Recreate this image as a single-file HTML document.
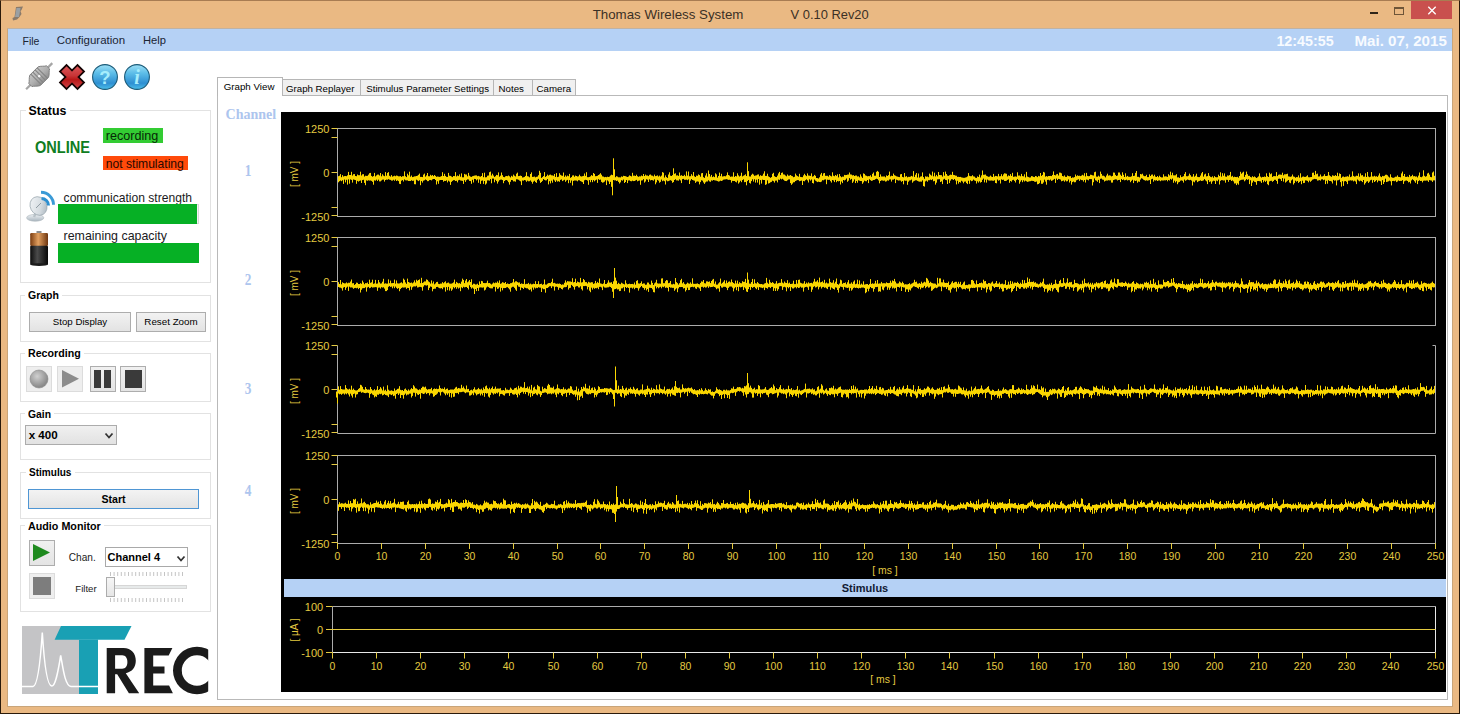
<!DOCTYPE html><html><head><meta charset="utf-8"><style>
html,body{margin:0;padding:0;width:1460px;height:716px;overflow:hidden;background:#fff}
.t{position:absolute;white-space:pre;line-height:1;font-family:"Liberation Sans",sans-serif}
.r{position:absolute;box-sizing:border-box}
svg{position:absolute}
</style></head><body>

<div class="r" style="left:0px;top:0px;width:1460px;height:714px;background:#EAB983;border:1px solid #2a1a0a;border-top-color:#A87C52"></div>
<div class="r" style="left:7px;top:28px;width:1446px;height:679px;background:#fff;border:1px solid #C9A57A;border-top-color:#BFB2A4"></div>
<div class="r" style="left:8px;top:29px;width:1444px;height:22px;background:#B5D1F5"></div>
<div class="t" style="left:592.7px;top:8.24px;font-size:13.3px;font-weight:400;color:#3b3025;font-family:'Liberation Sans',sans-serif;">Thomas Wireless System</div>
<div class="t" style="left:790.6px;top:8.58px;font-size:12.9px;font-weight:400;color:#3b3025;font-family:'Liberation Sans',sans-serif;">V 0.10 Rev20</div>
<svg style="left:11px;top:5px" width="14" height="17" viewBox="0 0 14 17"><path d="M5 2 L12 1.5 L10.5 5 L9.5 6 L10.5 9 L8.5 12 L6 14.5 L2 15.5 L1.5 13 L3.5 12 Z" fill="#8a7a6a"/><path d="M5.5 3 L9.5 3 L8 12 L4 12 Z" fill="#9aa0a4"/></svg>
<div class="r" style="left:1370px;top:12px;width:8px;height:2px;background:#2e2418"></div>
<div class="r" style="left:1394px;top:7px;width:10px;height:8px;border:1px solid #6e5538;border-top-width:2px"></div>
<div class="r" style="left:1411px;top:1px;width:41px;height:18px;background:#C9504E"></div>
<svg style="left:1426px;top:4px" width="12" height="12"><path d="M2.3 2.8L9.7 10.2M9.7 2.8L2.3 10.2" stroke="#fff" stroke-width="1.35"/></svg>
<div class="t" style="left:22.5px;top:35.51px;font-size:10.5px;font-weight:400;color:#1b2433;font-family:'Liberation Sans',sans-serif;">File</div>
<div class="t" style="left:56.7px;top:34.67px;font-size:11.5px;font-weight:400;color:#1b2433;font-family:'Liberation Sans',sans-serif;">Configuration</div>
<div class="t" style="left:143px;top:34.92px;font-size:11.2px;font-weight:400;color:#1b2433;font-family:'Liberation Sans',sans-serif;">Help</div>
<div class="t" style="left:1276.4px;top:33.90px;font-size:14.3px;font-weight:700;color:#f8fbff;font-family:'Liberation Sans',sans-serif;">12:45:55</div>
<div class="t" style="left:1354.5px;top:33.22px;font-size:15.1px;font-weight:700;color:#f8fbff;font-family:'Liberation Sans',sans-serif;">Mai. 07, 2015</div>
<div class="r" style="left:20px;top:110px;width:191px;height:173px;border:1px solid #E2E2E2"></div>
<div class="r" style="left:25.5px;top:109px;width:44px;height:3px;background:#fff"></div>
<div class="t" style="left:28.5px;top:105.10px;font-size:12.4px;font-weight:700;color:#000;font-family:'Liberation Sans',sans-serif;transform:scaleX(1.0);transform-origin:0 0">Status</div>
<div class="r" style="left:20px;top:295px;width:191px;height:47px;border:1px solid #E2E2E2"></div>
<div class="r" style="left:25px;top:294px;width:37px;height:3px;background:#fff"></div>
<div class="t" style="left:28px;top:290.13px;font-size:11.3px;font-weight:700;color:#000;font-family:'Liberation Sans',sans-serif;transform:scaleX(0.93);transform-origin:0 0">Graph</div>
<div class="r" style="left:20px;top:353px;width:191px;height:49px;border:1px solid #E2E2E2"></div>
<div class="r" style="left:25px;top:352px;width:59px;height:3px;background:#fff"></div>
<div class="t" style="left:28px;top:348.13px;font-size:11.3px;font-weight:700;color:#000;font-family:'Liberation Sans',sans-serif;transform:scaleX(0.943);transform-origin:0 0">Recording</div>
<div class="r" style="left:20px;top:413px;width:191px;height:47px;border:1px solid #E2E2E2"></div>
<div class="r" style="left:25px;top:412px;width:29px;height:3px;background:#fff"></div>
<div class="t" style="left:28px;top:408.63px;font-size:11.3px;font-weight:700;color:#000;font-family:'Liberation Sans',sans-serif;transform:scaleX(0.916);transform-origin:0 0">Gain</div>
<div class="r" style="left:20px;top:472px;width:191px;height:47px;border:1px solid #E2E2E2"></div>
<div class="r" style="left:26px;top:471px;width:49px;height:3px;background:#fff"></div>
<div class="t" style="left:29px;top:467.33px;font-size:11.3px;font-weight:700;color:#000;font-family:'Liberation Sans',sans-serif;transform:scaleX(0.89);transform-origin:0 0">Stimulus</div>
<div class="r" style="left:20px;top:525px;width:191px;height:87px;border:1px solid #E2E2E2"></div>
<div class="r" style="left:24.8px;top:524px;width:79px;height:3px;background:#fff"></div>
<div class="t" style="left:27.8px;top:520.83px;font-size:11.3px;font-weight:700;color:#000;font-family:'Liberation Sans',sans-serif;transform:scaleX(0.95);transform-origin:0 0">Audio Monitor</div>
<div class="t" style="left:34.8px;top:140.29px;font-size:15.6px;font-weight:700;color:#0f7d22;font-family:'Liberation Sans',sans-serif;transform:scaleX(0.935);transform-origin:0 0">ONLINE</div>
<div class="r" style="left:103px;top:128px;width:60px;height:15px;background:#33CC33"></div>
<div class="t" style="left:105.8px;top:130.13px;font-size:12.6px;font-weight:400;color:#062806;font-family:'Liberation Sans',sans-serif;">recording</div>
<div class="r" style="left:103px;top:156px;width:85px;height:14px;background:#FF4A0A"></div>
<div class="t" style="left:105.8px;top:157.76px;font-size:12.1px;font-weight:400;color:#2a0800;font-family:'Liberation Sans',sans-serif;">not stimulating</div>
<div class="t" style="left:63.6px;top:191.66px;font-size:12.1px;font-weight:400;color:#1a1a22;font-family:'Liberation Sans',sans-serif;">communication strength</div>
<div class="r" style="left:58px;top:204px;width:141px;height:20px;background:#F4F4F4;border:1px solid #D8D8D8;border-left:none"></div>
<div class="r" style="left:58px;top:204px;width:139px;height:20px;background:#06B025"></div>
<div class="t" style="left:63.6px;top:230.40px;font-size:12.4px;font-weight:400;color:#1a1a22;font-family:'Liberation Sans',sans-serif;">remaining capacity</div>
<div class="r" style="left:58px;top:243px;width:141px;height:20px;background:#06B025"></div>
<div class="r" style="left:29px;top:312px;width:102px;height:20px;background:linear-gradient(#F2F2F2,#E3E3E3);border:1px solid #ADADAD"></div>
<div class="t" style="left:29px;top:312px;width:102px;height:20px;line-height:20px;text-align:center;font-size:9.7px;font-weight:400;color:#000">Stop Display</div>
<div class="r" style="left:136px;top:312px;width:70px;height:20px;background:linear-gradient(#F2F2F2,#E3E3E3);border:1px solid #ADADAD"></div>
<div class="t" style="left:136px;top:312px;width:70px;height:20px;line-height:20px;text-align:center;font-size:9.8px;font-weight:400;color:#000">Reset Zoom</div>
<div class="r" style="left:26px;top:366px;width:26px;height:26px;background:#EEEEEE;border:1px solid #DCDCDC"></div>
<div class="r" style="left:57px;top:366px;width:26px;height:26px;background:#EEEEEE;border:1px solid #DCDCDC"></div>
<div class="r" style="left:90px;top:366px;width:26px;height:26px;background:linear-gradient(#F0F0F0,#E4E4E4);border:1px solid #ADADAD"></div>
<div class="r" style="left:120px;top:366px;width:26px;height:26px;background:linear-gradient(#F0F0F0,#E4E4E4);border:1px solid #ADADAD"></div>
<svg style="left:26px;top:366px" width="26" height="26"><defs><radialGradient id="rg" cx="0.4" cy="0.35" r="0.6"><stop offset="0" stop-color="#d0d0d0"/><stop offset="1" stop-color="#8a8a8a"/></radialGradient></defs><circle cx="13" cy="13" r="9" fill="url(#rg)" stroke="#888" stroke-width="0.6"/></svg>
<svg style="left:57px;top:366px" width="26" height="26"><path d="M5 4L22 12.7L5 21.4Z" fill="#8c8c8c"/></svg>
<svg style="left:90px;top:366px" width="26" height="26"><rect x="4" y="4" width="7" height="18" fill="#3a3a3a"/><rect x="14" y="4" width="7" height="18" fill="#3a3a3a"/></svg>
<svg style="left:120px;top:366px" width="26" height="26"><rect x="5" y="4" width="17" height="18" fill="#3a3a3a"/></svg>
<div class="r" style="left:25px;top:425px;width:92px;height:20px;background:linear-gradient(#F0F0F0,#E2E2E2);border:1px solid #ACACAC"></div>
<div class="t" style="left:28.7px;top:429.48px;font-size:11.6px;font-weight:700;color:#000;font-family:'Liberation Sans',sans-serif;">x 400</div>
<svg style="left:104px;top:432px" width="10" height="8"><path d="M1.5 1.5L5 5.5L8.5 1.5" fill="none" stroke="#333" stroke-width="1.8"/></svg>
<div class="r" style="left:28px;top:489px;width:171px;height:20px;background:linear-gradient(#F3F3F3,#E4E4E4);border:1px solid #4F96D4"></div>
<div class="t" style="left:28px;top:489px;width:171px;height:20px;line-height:20px;text-align:center;font-size:10.6px;font-weight:700;color:#000">Start</div>
<div class="r" style="left:29px;top:540px;width:26px;height:26px;background:linear-gradient(#F0F0F0,#E4E4E4);border:1px solid #ADADAD"></div>
<svg style="left:29px;top:540px" width="26" height="26"><path d="M4 4L21 12.5L4 21Z" fill="#1E8A1E"/></svg>
<div class="r" style="left:29px;top:573px;width:26px;height:26px;background:#EEEEEE;border:1px solid #DCDCDC"></div>
<div class="r" style="left:33px;top:577px;width:18px;height:18px;background:#7d7d7d"></div>
<div class="t" style="left:68.8px;top:552.75px;font-size:10.1px;font-weight:400;color:#222;font-family:'Liberation Sans',sans-serif;">Chan.</div>
<div class="r" style="left:105px;top:547px;width:83px;height:20px;background:#fff;border:1px solid #A9A9A9"></div>
<div class="t" style="left:107.5px;top:552.19px;font-size:11.0px;font-weight:700;color:#000;font-family:'Liberation Sans',sans-serif;">Channel 4</div>
<svg style="left:176px;top:555px" width="10" height="8"><path d="M1.5 1.5L5 5.5L8.5 1.5" fill="none" stroke="#333" stroke-width="1.8"/></svg>
<div class="t" style="left:75.3px;top:583.77px;font-size:9.6px;font-weight:400;color:#222;font-family:'Liberation Sans',sans-serif;">Filter</div>
<div class="r" style="left:114px;top:585px;width:73px;height:4px;background:#E7EAEA;border:1px solid #D6D6D6"></div>
<div class="r" style="left:106px;top:577px;width:9px;height:20px;background:linear-gradient(#F6F6F6,#E6E6E6);border:1px solid #ACACAC"></div>
<svg style="left:0;top:0" width="220" height="620"><g stroke="#C4C4C4" stroke-width="1"><line x1="110.5" y1="572" x2="110.5" y2="576" /><line x1="110.5" y1="598" x2="110.5" y2="602" /><line x1="114.1" y1="572" x2="114.1" y2="576" /><line x1="114.1" y1="598" x2="114.1" y2="602" /><line x1="117.7" y1="572" x2="117.7" y2="576" /><line x1="117.7" y1="598" x2="117.7" y2="602" /><line x1="121.3" y1="572" x2="121.3" y2="576" /><line x1="121.3" y1="598" x2="121.3" y2="602" /><line x1="124.9" y1="572" x2="124.9" y2="576" /><line x1="124.9" y1="598" x2="124.9" y2="602" /><line x1="128.5" y1="572" x2="128.5" y2="576" /><line x1="128.5" y1="598" x2="128.5" y2="602" /><line x1="132.1" y1="572" x2="132.1" y2="576" /><line x1="132.1" y1="598" x2="132.1" y2="602" /><line x1="135.7" y1="572" x2="135.7" y2="576" /><line x1="135.7" y1="598" x2="135.7" y2="602" /><line x1="139.3" y1="572" x2="139.3" y2="576" /><line x1="139.3" y1="598" x2="139.3" y2="602" /><line x1="142.9" y1="572" x2="142.9" y2="576" /><line x1="142.9" y1="598" x2="142.9" y2="602" /><line x1="146.5" y1="572" x2="146.5" y2="576" /><line x1="146.5" y1="598" x2="146.5" y2="602" /><line x1="150.1" y1="572" x2="150.1" y2="576" /><line x1="150.1" y1="598" x2="150.1" y2="602" /><line x1="153.7" y1="572" x2="153.7" y2="576" /><line x1="153.7" y1="598" x2="153.7" y2="602" /><line x1="157.3" y1="572" x2="157.3" y2="576" /><line x1="157.3" y1="598" x2="157.3" y2="602" /><line x1="160.9" y1="572" x2="160.9" y2="576" /><line x1="160.9" y1="598" x2="160.9" y2="602" /><line x1="164.5" y1="572" x2="164.5" y2="576" /><line x1="164.5" y1="598" x2="164.5" y2="602" /><line x1="168.1" y1="572" x2="168.1" y2="576" /><line x1="168.1" y1="598" x2="168.1" y2="602" /><line x1="171.7" y1="572" x2="171.7" y2="576" /><line x1="171.7" y1="598" x2="171.7" y2="602" /><line x1="175.3" y1="572" x2="175.3" y2="576" /><line x1="175.3" y1="598" x2="175.3" y2="602" /><line x1="178.9" y1="572" x2="178.9" y2="576" /><line x1="178.9" y1="598" x2="178.9" y2="602" /><line x1="182.5" y1="572" x2="182.5" y2="576" /><line x1="182.5" y1="598" x2="182.5" y2="602" /></g></svg>
<svg style="left:20px;top:58px" width="40" height="38" viewBox="0 0 40 38">
<defs><linearGradient id="pg" x1="0" y1="0" x2="0" y2="1"><stop offset="0" stop-color="#c4c4c4"/><stop offset="0.5" stop-color="#b0b0b0"/><stop offset="1" stop-color="#8e8e8e"/></linearGradient></defs>
<g transform="translate(19.2 18.2) rotate(-45)">
<rect x="-18.5" y="-1.1" width="37" height="2.2" fill="#a6a6a6"/>
<path d="M-12.5 -2.2C-10.5 -3 -8.5 -6.3 -5.8 -7.4L5.8 -7.4C8.5 -6.3 10.5 -3 12.5 -2.2L12.5 2.2C10.5 3 8.5 6.3 5.8 7.4L-5.8 7.4C-8.5 6.3 -10.5 3 -12.5 2.2Z" fill="url(#pg)" stroke="#7e7e7e" stroke-width="0.9"/>
<path d="M-4.5 -7.4V7.4M-1.6 -7.4V7.4M1.6 -7.4V7.4M4.5 -7.4V7.4" stroke="#858585" stroke-width="1.1"/>
<circle cx="0" cy="0" r="1.3" fill="#f4f4f4"/>
</g>
</svg>
<svg style="left:57px;top:62px" width="30" height="30" viewBox="0 0 30 30">
<defs><linearGradient id="xg" gradientUnits="userSpaceOnUse" x1="0" y1="2" x2="0" y2="28"><stop offset="0" stop-color="#dc5c5e"/><stop offset="0.45" stop-color="#c83436"/><stop offset="0.6" stop-color="#b81818"/><stop offset="1" stop-color="#d24a4e"/></linearGradient></defs>
<path d="M5.6 5.6L24.4 24.4M24.4 5.6L5.6 24.4" stroke="#140404" stroke-width="11"/>
<path d="M6.9 6.9L23.1 23.1M23.1 6.9L6.9 23.1" stroke="url(#xg)" stroke-width="7.6"/>
</svg>
<svg style="left:90.8px;top:62.8px" width="28" height="28" viewBox="0 0 28 28">
<defs><linearGradient id="bg104" x1="0" y1="0" x2="0" y2="1"><stop offset="0" stop-color="#9ee0f6"/><stop offset="0.35" stop-color="#5cbde8"/><stop offset="0.75" stop-color="#2e8fd2"/><stop offset="1" stop-color="#4cc0ea"/></linearGradient></defs>
<circle cx="14" cy="14" r="12.4" fill="url(#bg104)" stroke="#1b5a78" stroke-width="1.1"/>
<text x="14" y="20.6" text-anchor="middle" fill="#a6eefc" style="font-weight:700;font-size:18.5px;font-family:Liberation Sans">?</text>
</svg>
<svg style="left:123px;top:62.8px" width="28" height="28" viewBox="0 0 28 28">
<defs><linearGradient id="bg137" x1="0" y1="0" x2="0" y2="1"><stop offset="0" stop-color="#9ee0f6"/><stop offset="0.35" stop-color="#5cbde8"/><stop offset="0.75" stop-color="#2e8fd2"/><stop offset="1" stop-color="#4cc0ea"/></linearGradient></defs>
<circle cx="14" cy="14" r="12.4" fill="url(#bg137)" stroke="#1b5a78" stroke-width="1.1"/>
<text x="14" y="20.6" text-anchor="middle" fill="#a6eefc" style="font-weight:700;font-style:italic;font-size:20px;font-family:Liberation Serif">i</text>
</svg>
<svg style="left:22px;top:186px" width="36" height="40" viewBox="22 186 36 40">
<defs><linearGradient id="sg" x1="0" y1="0" x2="1" y2="1"><stop offset="0" stop-color="#f6f8fa"/><stop offset="0.6" stop-color="#d4dbe0"/><stop offset="1" stop-color="#9eabb5"/></linearGradient>
<linearGradient id="sb" x1="0" y1="0" x2="0" y2="1"><stop offset="0" stop-color="#eef2f5"/><stop offset="1" stop-color="#aab6bf"/></linearGradient></defs>
<ellipse cx="35.2" cy="217.8" rx="8.6" ry="3.4" fill="url(#sb)" stroke="#a9b3ba" stroke-width="0.6"/>
<path d="M34 217 L37 210" stroke="#b9c2c8" stroke-width="2.4"/>
<ellipse cx="38.5" cy="206" rx="8.2" ry="9.6" transform="rotate(-28 38.5 206)" fill="url(#sg)" stroke="#9aa6ae" stroke-width="0.7"/>
<path d="M36 208 L41 203" stroke="#7e8a92" stroke-width="0.8"/>
<path d="M41.5 198.5 A7 7 0 0 1 48.5 205.5" fill="none" stroke="#2d8fd0" stroke-width="3"/>
<path d="M41 192.3 A12.5 12.5 0 0 1 53.5 204.8" fill="none" stroke="#3a9ad6" stroke-width="3"/>
</svg>
<svg style="left:28px;top:230px" width="22" height="37" viewBox="0 0 22 37">
<defs><linearGradient id="bt" x1="0" y1="0" x2="1" y2="0"><stop offset="0" stop-color="#7a3c10"/><stop offset="0.45" stop-color="#e2a060"/><stop offset="1" stop-color="#6e3610"/></linearGradient>
<linearGradient id="bb" x1="0" y1="0" x2="1" y2="0"><stop offset="0" stop-color="#0c0c0c"/><stop offset="0.4" stop-color="#4a4a4a"/><stop offset="1" stop-color="#080808"/></linearGradient></defs>
<rect x="8.5" y="1" width="5" height="2.5" fill="#8a8a8a"/>
<rect x="2.2" y="3" width="17.8" height="13" rx="1.2" fill="url(#bt)"/>
<rect x="2.2" y="15.8" width="17.8" height="19" rx="1" fill="url(#bb)"/>
<ellipse cx="11.1" cy="34.6" rx="8.9" ry="1.4" fill="#1a1a1a"/>
</svg>
<svg style="left:21px;top:625px" width="190" height="70" viewBox="21 625 190 70">
<rect x="22" y="626" width="57" height="68" fill="#C4C4C6"/>
<rect x="79" y="639.5" width="19" height="54.5" fill="#19A0B4"/>
<path d="M61 626 L131.5 626 L124.5 639.7 L54.6 639.7 Z" fill="#19A0B4"/>
<path d="M22 686.5 L33 686.5 C38 686 40.5 660 42.3 632.5 C44 660 47 686 51.7 686 C56 686 58.5 668 60.7 655.5 C63 668 65 686 71 686.5 L98 686.5" fill="none" stroke="#fff" stroke-width="1.5"/>
<path fill="#1b1b1b" fill-rule="evenodd" d="M106.7 693.2V648H123.5C131.5 648 135.8 653.5 135.8 660.8C135.8 667.3 132 672 125.8 673.2L139.2 693.2H128.9L117.2 674.2H115.1V693.2ZM115.1 655.2V668.7H122.2C125.6 668.7 127.4 666 127.4 662C127.4 658 125.6 655.2 122.2 655.2Z"/>
<path fill="#1b1b1b" d="M144.4 648H172.4L168.7 655.5H153.2V666.4H164.5V673.5H153.2V685.6H169.1L172.9 693.2H144.4Z"/>
<clipPath id="cc"><rect x="160" y="640" width="48.2" height="60"/></clipPath>
<path clip-path="url(#cc)" fill="#1b1b1b" fill-rule="evenodd" d="M173 670.5A24 23.8 0 1 0 221 670.5A24 23.8 0 1 0 173 670.5ZM181.8 670.5A15.2 15.3 0 1 0 212.2 670.5A15.2 15.3 0 1 0 181.8 670.5Z"/>
</svg>
<div class="r" style="left:217px;top:95px;width:1231px;height:605px;background:#fff;border:1px solid #B9B9B9"></div>
<div class="r" style="left:282px;top:79px;width:79px;height:17px;background:#F0F0F0;border:1px solid #B6B6B6"></div>
<div class="t" style="left:286px;top:83.59px;font-size:9.7px;font-weight:400;color:#000;font-family:'Liberation Sans',sans-serif;">Graph Replayer</div>
<div class="r" style="left:360px;top:79px;width:134px;height:17px;background:#F0F0F0;border:1px solid #B6B6B6"></div>
<div class="t" style="left:366.3px;top:83.59px;font-size:9.7px;font-weight:400;color:#000;font-family:'Liberation Sans',sans-serif;">Stimulus Parameter Settings</div>
<div class="r" style="left:493px;top:79px;width:40px;height:17px;background:#F0F0F0;border:1px solid #B6B6B6"></div>
<div class="t" style="left:498.6px;top:83.59px;font-size:9.7px;font-weight:400;color:#000;font-family:'Liberation Sans',sans-serif;">Notes</div>
<div class="r" style="left:532px;top:79px;width:44px;height:17px;background:#F0F0F0;border:1px solid #B6B6B6"></div>
<div class="t" style="left:536.6px;top:83.59px;font-size:9.7px;font-weight:400;color:#000;font-family:'Liberation Sans',sans-serif;">Camera</div>
<div class="r" style="left:217px;top:77px;width:66px;height:19px;background:#fff;border:1px solid #B6B6B6;border-bottom:none"></div>
<div class="t" style="left:223.7px;top:81.55px;font-size:9.75px;font-weight:400;color:#000;font-family:'Liberation Sans',sans-serif;">Graph View</div>
<div class="t" style="left:225.6px;top:107.58px;font-size:14px;font-weight:700;color:#ADC5EE;font-family:'Liberation Serif',sans-serif;">Channel</div>
<div class="t" style="left:241px;top:161.7px;width:14px;text-align:center;font-family:'Liberation Serif',serif;font-weight:700;font-size:17px;color:#ADC5EE;transform:scaleX(0.78)">1</div>
<div class="t" style="left:241px;top:270.7px;width:14px;text-align:center;font-family:'Liberation Serif',serif;font-weight:700;font-size:17px;color:#ADC5EE;transform:scaleX(0.78)">2</div>
<div class="t" style="left:241px;top:379.6px;width:14px;text-align:center;font-family:'Liberation Serif',serif;font-weight:700;font-size:17px;color:#ADC5EE;transform:scaleX(0.78)">3</div>
<div class="t" style="left:241px;top:481.9px;width:14px;text-align:center;font-family:'Liberation Serif',serif;font-weight:700;font-size:17px;color:#ADC5EE;transform:scaleX(0.78)">4</div>
<svg style="left:281px;top:112px" width="1166" height="580" viewBox="281 112 1166 580"><rect x="281" y="112" width="1165" height="580" fill="#000"/><rect x="337.5" y="128.5" width="1098.0" height="88.0" fill="none" stroke="#ABABAB" stroke-width="1"/><path d="M331.5 128.5H337.5M331.5 172.5H337.5M331.5 215.5H337.5M331.5 137.5H337.5M331.5 207.5H337.5" stroke="#E4CA40" stroke-width="1"/><text transform="translate(329.4 132.8) scale(0.95 1)" text-anchor="end" fill="#E4CA40" style="font-family:Liberation Sans,sans-serif;font-size:11.6px">1250</text><text transform="translate(329.4 176.8) scale(0.95 1)" text-anchor="end" fill="#E4CA40" style="font-family:Liberation Sans,sans-serif;font-size:11.6px">0</text><text transform="translate(329.4 220.8) scale(0.95 1)" text-anchor="end" fill="#E4CA40" style="font-family:Liberation Sans,sans-serif;font-size:11.6px">-1250</text><text transform="translate(298 174.0) rotate(-90)" text-anchor="middle" fill="#E4CA40" style="font-family:'Liberation Sans',sans-serif;font-size:10px">[ mV ]</text><path d="M338.5 176.2V182.3M339.5 175.7V181.2M340.5 174.1V180.5M341.5 177.2V181.2M342.5 175.1V180.3M343.5 176.5V183.9M344.5 176.1V179.6M345.5 176.0V182.4M346.5 176.2V179.8M347.5 175.3V184.6M348.5 171.9V179.4M349.5 175.0V183.7M350.5 175.0V179.4M351.5 171.8V179.9M352.5 175.5V182.6M353.5 174.2V179.5M354.5 174.1V179.8M355.5 176.0V180.1M356.5 176.2V183.8M357.5 174.5V180.9M358.5 175.2V181.6M359.5 175.2V180.9M360.5 171.7V180.5M361.5 175.5V183.0M362.5 174.3V180.1M363.5 174.2V179.8M364.5 176.5V182.9M365.5 175.7V185.2M366.5 175.9V180.4M367.5 175.8V180.8M368.5 174.6V180.3M369.5 173.2V180.6M370.5 172.9V180.5M371.5 175.9V180.9M372.5 176.7V181.8M373.5 176.1V184.7M374.5 172.9V180.4M375.5 176.4V180.7M376.5 175.4V179.7M377.5 174.6V181.0M378.5 174.6V179.7M379.5 175.5V181.4M380.5 173.0V181.4M381.5 176.3V180.5M382.5 174.3V179.7M383.5 175.6V179.6M384.5 176.2V181.6M385.5 172.1V180.0M386.5 175.7V179.6M387.5 172.9V179.8M388.5 172.1V179.2M389.5 175.8V179.7M390.5 176.6V179.9M391.5 175.1V180.6M392.5 176.6V180.6M393.5 176.2V179.8M394.5 175.7V180.8M395.5 176.2V179.5M396.5 175.5V181.0M397.5 175.8V180.4M398.5 176.3V181.1M399.5 176.3V183.8M400.5 176.1V184.1M401.5 176.9V180.7M402.5 176.2V180.1M403.5 176.2V181.5M404.5 171.4V179.5M405.5 176.2V180.3M406.5 177.1V180.4M407.5 173.7V180.4M408.5 175.3V181.0M409.5 171.7V181.0M410.5 176.7V181.0M411.5 175.5V180.3M412.5 177.1V180.9M413.5 176.8V180.7M414.5 176.4V184.2M415.5 176.3V184.3M416.5 176.0V179.7M417.5 175.7V180.4M418.5 174.8V181.1M419.5 173.6V180.3M420.5 176.9V185.2M421.5 176.9V181.1M422.5 177.1V182.6M423.5 174.6V180.7M424.5 173.6V180.3M425.5 176.6V179.5M426.5 175.4V180.1M427.5 173.0V181.2M428.5 176.2V181.1M429.5 176.3V180.1M430.5 174.8V180.0M431.5 175.7V180.4M432.5 175.0V179.4M433.5 176.1V179.0M434.5 175.0V179.0M435.5 175.9V180.0M436.5 176.8V184.5M437.5 176.5V181.3M438.5 176.7V183.8M439.5 176.9V180.4M440.5 176.6V180.0M441.5 176.1V180.0M442.5 172.2V180.0M443.5 176.0V181.7M444.5 173.8V180.9M445.5 175.9V181.0M446.5 176.8V180.4M447.5 176.9V182.4M448.5 172.9V180.7M449.5 175.7V181.6M450.5 175.9V184.9M451.5 176.5V181.9M452.5 177.1V180.9M453.5 176.0V180.2M454.5 176.1V180.2M455.5 172.1V181.0M456.5 176.4V180.8M457.5 175.5V182.4M458.5 176.1V180.3M459.5 174.4V179.9M460.5 176.7V180.5M461.5 173.4V180.7M462.5 177.3V180.9M463.5 177.3V183.9M464.5 173.9V180.2M465.5 174.5V181.9M466.5 174.5V180.2M467.5 176.3V179.4M468.5 172.9V179.5M469.5 175.7V180.9M470.5 176.6V181.1M471.5 176.9V183.8M472.5 176.2V179.8M473.5 175.9V182.5M474.5 175.6V178.9M475.5 175.4V179.1M476.5 175.4V180.4M477.5 176.2V179.4M478.5 175.9V182.8M479.5 176.4V179.5M480.5 176.7V183.9M481.5 176.0V180.8M482.5 173.1V180.5M483.5 177.2V183.9M484.5 172.7V181.0M485.5 177.3V184.6M486.5 177.2V183.5M487.5 175.7V180.4M488.5 175.5V180.4M489.5 172.2V180.7M490.5 171.6V179.1M491.5 175.5V183.3M492.5 173.7V178.6M493.5 175.5V178.6M494.5 176.9V182.3M495.5 176.2V179.8M496.5 174.9V181.1M497.5 175.2V183.6M498.5 172.4V181.6M499.5 176.7V180.2M500.5 175.7V179.7M501.5 172.5V179.6M502.5 175.2V180.1M503.5 176.9V183.2M504.5 177.2V181.0M505.5 176.3V180.2M506.5 176.0V180.0M507.5 176.2V180.7M508.5 175.5V182.2M509.5 176.3V184.6M510.5 177.4V181.8M511.5 175.8V180.0M512.5 176.6V180.2M513.5 174.6V181.4M514.5 175.7V181.3M515.5 176.4V181.7M516.5 173.7V179.3M517.5 172.6V179.4M518.5 176.1V179.8M519.5 175.9V180.6M520.5 175.6V181.3M521.5 176.0V185.1M522.5 177.5V180.5M523.5 177.3V180.7M524.5 176.9V180.0M525.5 175.9V180.4M526.5 172.2V181.8M527.5 176.2V180.7M528.5 176.5V181.3M529.5 177.3V181.2M530.5 174.0V180.5M531.5 172.4V181.8M532.5 176.9V183.7M533.5 176.8V181.7M534.5 176.5V180.8M535.5 177.3V182.1M536.5 176.8V182.9M537.5 176.6V179.8M538.5 175.2V178.9M539.5 170.8V180.5M540.5 172.8V182.9M541.5 177.9V182.0M542.5 177.1V180.9M543.5 176.1V179.1M544.5 172.1V179.9M545.5 176.9V180.4M546.5 176.1V180.3M547.5 174.6V179.1M548.5 175.6V184.4M549.5 174.8V181.2M550.5 174.6V183.4M551.5 175.3V180.7M552.5 175.4V182.7M553.5 175.8V179.5M554.5 174.0V180.5M555.5 176.9V182.0M556.5 173.1V180.4M557.5 177.1V181.6M558.5 176.7V181.2M559.5 173.2V181.8M560.5 174.8V179.9M561.5 175.5V179.5M562.5 175.8V181.1M563.5 172.5V180.4M564.5 176.8V179.8M565.5 175.4V181.8M566.5 176.6V180.5M567.5 175.6V179.9M568.5 176.2V183.2M569.5 173.9V180.1M570.5 177.8V182.8M571.5 177.1V180.5M572.5 175.5V185.5M573.5 175.3V180.9M574.5 176.7V180.5M575.5 175.6V180.5M576.5 176.0V180.6M577.5 176.5V181.3M578.5 176.3V180.2M579.5 174.7V180.3M580.5 176.2V181.1M581.5 176.5V181.6M582.5 176.2V182.2M583.5 175.9V184.0M584.5 173.5V180.3M585.5 175.8V179.8M586.5 172.2V180.0M587.5 177.2V180.6M588.5 177.2V184.8M589.5 176.9V180.1M590.5 176.3V182.2M591.5 175.1V180.0M592.5 175.8V182.2M593.5 173.0V180.1M594.5 173.9V181.3M595.5 176.2V180.3M596.5 176.1V179.6M597.5 175.8V182.9M598.5 175.0V179.2M599.5 174.3V179.9M600.5 173.2V179.6M601.5 174.7V181.9M602.5 176.4V182.7M603.5 176.6V182.4M604.5 177.2V181.7M605.5 176.9V180.3M606.5 177.2V185.1M607.5 176.7V180.4M608.5 177.0V181.4M609.5 176.6V184.0M610.5 175.5V181.9M611.5 174.7V179.4M612.5 175.1V179.1M613.5 171.8V180.0M614.5 175.1V180.4M615.5 177.2V180.3M616.5 176.2V181.0M617.5 176.6V180.6M618.5 177.3V181.9M619.5 177.3V183.5M620.5 177.4V182.4M621.5 176.4V180.2M622.5 176.8V180.7M623.5 175.8V179.6M624.5 176.0V183.0M625.5 176.2V182.0M626.5 176.6V180.0M627.5 177.0V183.1M628.5 176.5V180.5M629.5 175.4V180.4M630.5 175.9V181.1M631.5 176.4V181.3M632.5 172.8V180.7M633.5 175.7V181.1M634.5 175.6V181.0M635.5 176.0V180.5M636.5 174.7V179.9M637.5 176.2V181.3M638.5 176.8V180.8M639.5 176.3V180.5M640.5 176.4V184.8M641.5 175.5V180.5M642.5 176.1V180.3M643.5 174.0V179.2M644.5 176.0V182.6M645.5 174.6V181.5M646.5 175.5V179.3M647.5 175.5V179.7M648.5 176.1V182.0M649.5 174.8V179.4M650.5 174.5V180.4M651.5 175.5V180.0M652.5 175.7V180.2M653.5 176.4V180.7M654.5 174.6V179.4M655.5 176.1V184.3M656.5 175.8V182.4M657.5 175.4V179.9M658.5 176.5V180.7M659.5 175.6V182.7M660.5 176.6V181.9M661.5 175.6V179.6M662.5 172.1V181.2M663.5 172.7V180.6M664.5 177.5V181.2M665.5 175.4V184.5M666.5 177.1V180.4M667.5 177.9V181.3M668.5 174.5V181.1M669.5 172.3V180.6M670.5 175.7V180.2M671.5 176.0V180.7M672.5 175.1V182.7M673.5 174.6V182.1M674.5 175.2V180.0M675.5 173.3V179.3M676.5 175.5V180.4M677.5 175.3V180.4M678.5 175.9V180.7M679.5 172.5V179.4M680.5 175.7V180.4M681.5 175.2V183.1M682.5 175.9V179.2M683.5 175.9V178.9M684.5 174.8V179.8M685.5 176.2V179.8M686.5 171.4V179.6M687.5 175.6V180.2M688.5 171.5V179.4M689.5 176.3V184.0M690.5 176.2V180.6M691.5 174.2V179.1M692.5 175.7V180.0M693.5 172.0V180.4M694.5 176.3V180.7M695.5 177.0V182.9M696.5 175.6V181.7M697.5 175.8V181.4M698.5 174.4V181.7M699.5 175.1V184.4M700.5 176.7V182.1M701.5 173.3V180.3M702.5 173.0V180.7M703.5 177.2V182.5M704.5 177.9V183.9M705.5 175.5V182.4M706.5 173.3V181.5M707.5 176.6V181.5M708.5 170.5V180.3M709.5 174.0V181.4M710.5 176.6V181.8M711.5 174.9V180.4M712.5 177.1V180.7M713.5 176.4V180.0M714.5 177.1V180.3M715.5 173.3V180.5M716.5 174.4V180.7M717.5 177.6V181.1M718.5 176.0V181.6M719.5 172.6V181.3M720.5 176.2V180.7M721.5 173.8V181.0M722.5 176.5V180.5M723.5 176.3V179.7M724.5 176.1V179.5M725.5 176.3V179.4M726.5 175.3V179.2M727.5 172.4V179.5M728.5 175.0V179.9M729.5 175.6V179.8M730.5 176.8V180.1M731.5 176.5V182.6M732.5 176.6V180.9M733.5 172.3V181.0M734.5 176.9V181.0M735.5 176.0V181.8M736.5 176.4V182.4M737.5 173.3V180.6M738.5 175.4V183.6M739.5 176.5V182.4M740.5 175.8V180.8M741.5 172.7V182.2M742.5 176.4V180.1M743.5 175.7V179.4M744.5 175.2V182.2M745.5 174.3V181.9M746.5 176.0V181.9M747.5 176.3V181.1M748.5 176.3V180.0M749.5 176.4V182.9M750.5 176.5V183.6M751.5 174.8V181.1M752.5 173.7V179.3M753.5 174.5V181.6M754.5 175.8V179.3M755.5 175.5V182.6M756.5 175.3V179.7M757.5 174.6V182.6M758.5 174.4V179.1M759.5 176.3V184.7M760.5 175.2V180.1M761.5 175.9V183.6M762.5 175.6V179.7M763.5 173.6V180.0M764.5 171.3V180.0M765.5 175.9V184.9M766.5 175.9V184.3M767.5 173.7V180.4M768.5 176.4V183.5M769.5 177.1V183.1M770.5 177.8V182.3M771.5 177.1V181.9M772.5 173.8V180.7M773.5 172.8V181.2M774.5 176.2V182.6M775.5 176.9V180.7M776.5 177.1V180.6M777.5 175.6V182.4M778.5 173.4V179.6M779.5 171.9V179.9M780.5 175.1V178.7M781.5 172.9V179.4M782.5 172.5V178.8M783.5 174.4V179.7M784.5 174.6V180.7M785.5 175.5V181.0M786.5 176.3V181.1M787.5 174.5V180.3M788.5 175.7V179.5M789.5 175.6V179.4M790.5 175.0V183.1M791.5 175.8V184.8M792.5 176.2V183.6M793.5 177.2V182.3M794.5 176.8V182.2M795.5 173.6V181.0M796.5 175.3V180.5M797.5 176.1V180.1M798.5 176.7V180.2M799.5 173.8V181.2M800.5 176.9V180.9M801.5 177.1V180.6M802.5 177.2V185.0M803.5 175.4V181.0M804.5 173.8V181.3M805.5 175.2V180.2M806.5 176.1V179.4M807.5 173.4V180.4M808.5 175.5V182.5M809.5 175.7V179.4M810.5 175.9V180.6M811.5 173.4V179.5M812.5 176.6V183.0M813.5 176.2V183.5M814.5 174.9V179.5M815.5 175.8V180.7M816.5 178.0V181.4M817.5 178.1V182.1M818.5 178.5V181.7M819.5 177.3V182.0M820.5 174.5V182.1M821.5 172.9V181.6M822.5 175.8V180.2M823.5 173.4V180.3M824.5 173.0V179.6M825.5 175.8V179.4M826.5 175.8V184.2M827.5 175.8V179.7M828.5 176.6V179.9M829.5 175.1V179.8M830.5 175.8V181.2M831.5 176.4V182.6M832.5 172.3V180.0M833.5 175.7V180.5M834.5 176.2V182.1M835.5 175.0V179.9M836.5 175.8V182.2M837.5 174.3V181.0M838.5 177.4V181.4M839.5 174.0V181.0M840.5 176.2V184.5M841.5 177.2V181.5M842.5 176.6V183.1M843.5 176.7V180.0M844.5 174.9V180.5M845.5 175.1V179.8M846.5 175.0V178.5M847.5 174.6V181.8M848.5 174.5V180.7M849.5 172.5V178.1M850.5 174.4V179.7M851.5 174.6V178.9M852.5 175.4V182.9M853.5 175.1V181.5M854.5 176.0V179.4M855.5 175.5V183.1M856.5 175.5V181.0M857.5 176.5V182.7M858.5 176.3V180.3M859.5 177.3V180.7M860.5 174.4V181.0M861.5 176.5V181.1M862.5 177.9V183.8M863.5 173.4V182.4M864.5 173.9V180.7M865.5 175.4V181.2M866.5 175.8V181.3M867.5 176.3V180.0M868.5 176.1V183.1M869.5 176.2V179.3M870.5 175.3V180.2M871.5 176.8V180.9M872.5 173.8V180.6M873.5 172.5V180.0M874.5 175.7V179.9M875.5 175.7V179.2M876.5 171.8V178.7M877.5 170.9V179.1M878.5 171.8V180.4M879.5 177.0V183.3M880.5 174.4V181.0M881.5 176.5V180.4M882.5 176.5V180.5M883.5 176.5V180.8M884.5 176.4V180.6M885.5 177.3V181.6M886.5 175.4V181.3M887.5 176.0V180.4M888.5 175.1V180.7M889.5 171.6V179.5M890.5 176.4V179.4M891.5 175.7V181.6M892.5 176.0V179.7M893.5 173.6V179.6M894.5 175.2V178.9M895.5 175.7V183.1M896.5 176.3V179.7M897.5 176.6V180.2M898.5 176.9V180.6M899.5 177.1V180.4M900.5 174.3V180.6M901.5 174.0V181.8M902.5 176.9V181.0M903.5 177.3V184.3M904.5 173.0V180.5M905.5 176.7V180.8M906.5 176.1V180.7M907.5 177.3V184.8M908.5 176.8V181.7M909.5 176.9V180.5M910.5 176.6V180.3M911.5 175.9V179.6M912.5 176.5V182.7M913.5 171.1V181.4M914.5 176.9V180.8M915.5 174.7V180.3M916.5 173.0V180.3M917.5 177.5V180.9M918.5 173.5V181.4M919.5 177.6V181.7M920.5 176.6V181.6M921.5 176.3V181.7M922.5 172.4V180.4M923.5 177.1V186.1M924.5 178.8V186.6M925.5 176.3V181.4M926.5 176.7V180.7M927.5 176.5V181.7M928.5 177.2V180.2M929.5 173.6V180.2M930.5 174.7V179.6M931.5 175.6V180.1M932.5 171.6V179.3M933.5 176.3V181.3M934.5 172.7V180.9M935.5 176.4V184.6M936.5 174.9V182.7M937.5 176.3V179.4M938.5 172.0V179.3M939.5 175.0V179.2M940.5 175.1V182.0M941.5 175.2V181.4M942.5 176.6V184.1M943.5 172.1V179.5M944.5 175.7V178.8M945.5 171.6V179.9M946.5 174.0V180.2M947.5 175.6V184.0M948.5 175.9V179.3M949.5 175.2V183.1M950.5 174.6V180.6M951.5 174.9V179.2M952.5 171.8V179.3M953.5 174.9V180.0M954.5 175.1V179.0M955.5 175.6V180.5M956.5 175.7V184.4M957.5 176.9V180.8M958.5 176.8V183.6M959.5 177.0V182.0M960.5 176.9V182.6M961.5 177.4V180.8M962.5 177.6V181.6M963.5 177.8V183.3M964.5 177.8V181.7M965.5 177.5V181.5M966.5 177.2V183.1M967.5 176.4V184.1M968.5 173.1V180.8M969.5 175.8V183.8M970.5 176.2V180.3M971.5 176.2V181.2M972.5 175.2V180.8M973.5 176.4V179.6M974.5 176.6V180.5M975.5 177.7V180.9M976.5 177.9V183.5M977.5 176.4V181.3M978.5 177.0V182.6M979.5 174.6V181.3M980.5 177.5V182.6M981.5 175.4V182.0M982.5 170.5V179.8M983.5 174.8V178.6M984.5 174.7V182.4M985.5 174.5V179.7M986.5 175.8V182.6M987.5 176.3V179.6M988.5 176.8V180.4M989.5 176.6V180.6M990.5 175.6V180.6M991.5 176.6V180.5M992.5 177.0V180.7M993.5 173.9V180.8M994.5 176.6V180.3M995.5 175.9V183.0M996.5 176.1V183.3M997.5 176.4V179.5M998.5 173.9V180.7M999.5 176.3V180.2M1000.5 176.2V183.5M1001.5 174.2V179.4M1002.5 176.2V179.9M1003.5 174.4V179.7M1004.5 173.3V181.0M1005.5 173.5V181.0M1006.5 173.8V180.7M1007.5 176.4V179.9M1008.5 175.4V179.4M1009.5 175.9V182.8M1010.5 174.1V181.0M1011.5 175.9V181.7M1012.5 172.8V180.2M1013.5 176.8V179.8M1014.5 176.6V180.9M1015.5 176.4V182.5M1016.5 176.7V180.1M1017.5 172.3V179.1M1018.5 175.6V180.0M1019.5 175.5V183.7M1020.5 176.3V181.7M1021.5 173.9V180.2M1022.5 176.1V182.2M1023.5 176.4V180.3M1024.5 174.3V181.5M1025.5 177.4V180.7M1026.5 171.9V181.3M1027.5 176.6V181.9M1028.5 177.1V181.6M1029.5 177.5V181.3M1030.5 177.4V181.2M1031.5 176.1V180.8M1032.5 176.3V180.9M1033.5 176.9V181.0M1034.5 177.1V181.7M1035.5 176.0V181.9M1036.5 176.3V181.5M1037.5 177.1V184.3M1038.5 175.9V184.0M1039.5 176.3V183.2M1040.5 173.0V180.4M1041.5 175.9V183.8M1042.5 174.9V183.8M1043.5 171.9V182.5M1044.5 172.5V179.7M1045.5 176.6V181.6M1046.5 176.1V184.7M1047.5 176.6V179.9M1048.5 176.0V179.8M1049.5 176.0V180.4M1050.5 175.9V179.6M1051.5 176.1V180.9M1052.5 174.9V180.4M1053.5 171.4V179.7M1054.5 175.0V178.9M1055.5 175.4V182.9M1056.5 174.3V178.6M1057.5 173.9V180.0M1058.5 175.5V178.9M1059.5 172.6V179.2M1060.5 172.7V179.6M1061.5 173.3V181.3M1062.5 176.0V180.9M1063.5 176.4V180.5M1064.5 175.4V181.7M1065.5 176.8V180.4M1066.5 176.9V181.4M1067.5 175.5V181.2M1068.5 176.1V179.5M1069.5 176.3V182.5M1070.5 176.2V180.9M1071.5 178.0V184.6M1072.5 177.4V182.1M1073.5 177.6V181.5M1074.5 177.1V182.3M1075.5 174.5V182.2M1076.5 176.2V180.3M1077.5 175.3V179.8M1078.5 175.9V179.3M1079.5 175.7V180.9M1080.5 176.1V179.5M1081.5 175.6V180.1M1082.5 174.8V180.2M1083.5 175.5V181.6M1084.5 173.2V180.0M1085.5 176.4V182.5M1086.5 172.9V179.6M1087.5 175.9V179.8M1088.5 176.2V180.4M1089.5 176.1V179.1M1090.5 174.7V179.1M1091.5 174.9V179.2M1092.5 175.3V185.5M1093.5 175.5V182.2M1094.5 172.2V178.4M1095.5 171.7V180.3M1096.5 176.6V180.7M1097.5 176.7V181.8M1098.5 175.7V179.9M1099.5 176.6V183.1M1100.5 171.6V178.8M1101.5 173.9V178.6M1102.5 175.7V179.6M1103.5 175.7V179.8M1104.5 176.3V181.5M1105.5 177.4V180.8M1106.5 175.5V180.5M1107.5 173.7V180.6M1108.5 175.6V180.2M1109.5 175.3V180.4M1110.5 175.6V180.3M1111.5 176.4V182.6M1112.5 175.9V182.6M1113.5 172.5V180.1M1114.5 172.7V179.7M1115.5 174.9V179.4M1116.5 176.0V179.5M1117.5 175.5V180.5M1118.5 172.5V180.0M1119.5 172.5V179.9M1120.5 174.6V182.1M1121.5 175.9V179.1M1122.5 172.3V180.0M1123.5 174.8V179.5M1124.5 177.0V180.3M1125.5 173.3V180.1M1126.5 176.7V179.7M1127.5 175.9V180.5M1128.5 176.7V180.1M1129.5 176.8V180.2M1130.5 176.8V182.2M1131.5 176.3V180.8M1132.5 173.2V179.8M1133.5 176.0V183.1M1134.5 175.7V180.5M1135.5 172.9V181.0M1136.5 171.0V180.6M1137.5 176.8V182.7M1138.5 176.8V181.5M1139.5 177.4V181.8M1140.5 174.0V179.6M1141.5 174.4V178.3M1142.5 173.7V178.7M1143.5 175.6V179.7M1144.5 176.2V180.2M1145.5 176.1V180.7M1146.5 174.8V180.3M1147.5 177.1V180.7M1148.5 177.1V180.4M1149.5 174.4V180.1M1150.5 176.0V184.0M1151.5 174.7V179.3M1152.5 174.5V178.8M1153.5 176.2V181.7M1154.5 174.7V180.2M1155.5 176.6V180.6M1156.5 177.0V180.2M1157.5 176.0V181.0M1158.5 177.2V180.5M1159.5 175.7V180.4M1160.5 176.9V181.2M1161.5 177.4V180.4M1162.5 177.4V180.5M1163.5 174.3V180.5M1164.5 176.5V180.3M1165.5 176.3V180.4M1166.5 176.5V180.0M1167.5 176.9V181.3M1168.5 174.2V180.0M1169.5 175.4V180.5M1170.5 171.7V178.9M1171.5 175.2V179.7M1172.5 172.7V178.6M1173.5 175.3V182.8M1174.5 175.4V180.7M1175.5 175.3V182.4M1176.5 174.2V181.2M1177.5 177.4V184.2M1178.5 177.3V182.4M1179.5 177.9V181.9M1180.5 175.3V180.7M1181.5 177.1V180.4M1182.5 176.7V180.8M1183.5 176.2V182.6M1184.5 173.9V179.6M1185.5 172.1V180.8M1186.5 176.2V180.2M1187.5 176.3V179.5M1188.5 175.7V179.9M1189.5 173.6V180.2M1190.5 175.2V179.9M1191.5 176.7V180.6M1192.5 176.6V185.5M1193.5 174.1V181.6M1194.5 176.7V182.3M1195.5 175.7V180.5M1196.5 173.7V180.3M1197.5 176.8V182.1M1198.5 177.1V181.3M1199.5 177.1V180.9M1200.5 175.6V180.4M1201.5 173.3V181.0M1202.5 172.0V180.8M1203.5 176.6V180.4M1204.5 174.5V179.1M1205.5 173.7V180.4M1206.5 176.4V181.3M1207.5 176.1V184.1M1208.5 173.1V180.1M1209.5 175.8V181.9M1210.5 176.8V181.4M1211.5 177.2V183.8M1212.5 176.3V181.5M1213.5 177.7V180.7M1214.5 176.1V180.9M1215.5 177.1V184.0M1216.5 177.3V180.6M1217.5 177.2V181.2M1218.5 174.7V179.6M1219.5 176.0V184.5M1220.5 172.3V180.8M1221.5 176.6V180.1M1222.5 173.2V180.2M1223.5 175.7V180.5M1224.5 173.4V180.4M1225.5 176.5V182.7M1226.5 176.8V179.8M1227.5 175.4V179.9M1228.5 175.7V181.8M1229.5 175.1V180.0M1230.5 171.9V179.8M1231.5 176.6V181.0M1232.5 175.8V180.4M1233.5 177.2V181.4M1234.5 176.7V183.5M1235.5 177.0V183.4M1236.5 177.1V185.1M1237.5 176.8V183.4M1238.5 177.7V184.7M1239.5 176.0V180.8M1240.5 171.8V180.2M1241.5 173.7V179.8M1242.5 172.6V179.7M1243.5 171.7V179.6M1244.5 176.9V181.3M1245.5 174.9V180.3M1246.5 171.6V179.1M1247.5 174.2V179.9M1248.5 175.9V179.3M1249.5 175.8V184.1M1250.5 176.9V180.3M1251.5 177.4V186.0M1252.5 176.2V182.6M1253.5 177.1V180.8M1254.5 176.4V181.8M1255.5 177.2V182.2M1256.5 178.0V184.8M1257.5 177.3V181.1M1258.5 176.4V181.0M1259.5 173.4V181.2M1260.5 176.6V181.4M1261.5 177.5V182.9M1262.5 176.9V180.0M1263.5 177.0V182.3M1264.5 176.5V180.7M1265.5 176.9V181.9M1266.5 173.3V180.8M1267.5 176.2V184.2M1268.5 177.0V185.2M1269.5 172.7V181.4M1270.5 174.2V180.9M1271.5 173.4V180.8M1272.5 176.9V181.8M1273.5 176.2V181.0M1274.5 176.1V179.8M1275.5 176.2V179.8M1276.5 172.1V181.0M1277.5 176.1V183.8M1278.5 174.8V178.8M1279.5 174.5V178.6M1280.5 174.6V179.2M1281.5 174.8V181.0M1282.5 172.7V178.2M1283.5 175.3V181.6M1284.5 174.3V178.6M1285.5 174.3V182.6M1286.5 174.1V181.7M1287.5 173.7V180.8M1288.5 176.4V180.0M1289.5 176.6V182.5M1290.5 176.8V183.2M1291.5 176.4V180.4M1292.5 174.5V179.4M1293.5 176.5V184.5M1294.5 176.8V183.1M1295.5 177.7V180.7M1296.5 177.1V181.7M1297.5 177.2V181.0M1298.5 175.4V182.9M1299.5 177.6V181.9M1300.5 173.3V181.1M1301.5 177.5V184.2M1302.5 176.7V180.7M1303.5 176.5V183.1M1304.5 176.9V182.9M1305.5 176.9V180.4M1306.5 176.3V180.5M1307.5 175.3V180.9M1308.5 177.2V182.3M1309.5 177.3V180.6M1310.5 177.1V181.8M1311.5 177.0V180.8M1312.5 172.8V179.7M1313.5 172.6V179.3M1314.5 175.1V178.9M1315.5 170.9V179.1M1316.5 174.2V179.2M1317.5 173.6V180.6M1318.5 176.5V180.4M1319.5 176.4V180.1M1320.5 174.5V180.6M1321.5 176.5V179.4M1322.5 176.4V179.3M1323.5 175.8V180.2M1324.5 174.2V179.7M1325.5 176.0V184.1M1326.5 176.0V180.8M1327.5 175.7V183.7M1328.5 172.0V180.2M1329.5 175.3V181.0M1330.5 176.2V181.0M1331.5 176.8V181.5M1332.5 175.3V183.5M1333.5 175.7V179.9M1334.5 175.9V180.7M1335.5 175.1V180.4M1336.5 176.0V185.4M1337.5 172.7V180.4M1338.5 176.2V180.2M1339.5 173.4V179.6M1340.5 174.0V182.1M1341.5 177.8V186.6M1342.5 176.7V181.2M1343.5 176.5V185.9M1344.5 177.1V181.3M1345.5 176.7V181.0M1346.5 176.6V181.8M1347.5 176.2V184.1M1348.5 176.7V180.7M1349.5 174.5V180.6M1350.5 177.1V180.3M1351.5 176.5V180.6M1352.5 171.4V180.4M1353.5 175.9V181.4M1354.5 176.6V180.7M1355.5 176.4V181.5M1356.5 175.7V184.1M1357.5 175.9V179.5M1358.5 173.4V180.5M1359.5 176.7V181.3M1360.5 173.4V180.6M1361.5 175.4V181.1M1362.5 175.1V182.1M1363.5 176.6V180.0M1364.5 176.6V184.6M1365.5 173.3V183.2M1366.5 177.0V181.7M1367.5 172.0V181.2M1368.5 176.5V182.9M1369.5 177.2V181.7M1370.5 176.7V180.3M1371.5 172.1V179.8M1372.5 176.4V182.8M1373.5 176.5V180.1M1374.5 175.8V182.0M1375.5 176.6V181.2M1376.5 176.2V180.1M1377.5 176.9V182.3M1378.5 175.5V180.6M1379.5 173.4V180.8M1380.5 176.4V181.3M1381.5 177.1V185.0M1382.5 175.9V180.2M1383.5 176.2V184.0M1384.5 175.8V182.1M1385.5 174.8V178.7M1386.5 174.7V182.0M1387.5 175.3V181.7M1388.5 176.6V181.3M1389.5 177.5V180.7M1390.5 174.3V181.3M1391.5 177.2V185.4M1392.5 177.7V181.0M1393.5 177.8V180.9M1394.5 177.4V181.2M1395.5 176.7V180.6M1396.5 176.7V182.1M1397.5 175.4V181.5M1398.5 176.9V180.5M1399.5 177.0V181.0M1400.5 177.3V180.9M1401.5 173.4V180.9M1402.5 171.6V180.2M1403.5 176.0V183.9M1404.5 174.0V181.3M1405.5 176.8V180.7M1406.5 176.9V180.5M1407.5 176.5V181.0M1408.5 177.1V182.4M1409.5 174.9V181.9M1410.5 176.5V183.5M1411.5 176.1V180.4M1412.5 174.8V179.3M1413.5 176.3V180.1M1414.5 176.1V181.3M1415.5 176.6V182.8M1416.5 176.4V180.3M1417.5 177.4V184.1M1418.5 175.6V181.1M1419.5 172.5V180.3M1420.5 176.9V181.0M1421.5 177.2V180.9M1422.5 176.4V182.4M1423.5 170.3V180.8M1424.5 175.8V180.6M1425.5 176.7V180.7M1426.5 176.2V180.5M1427.5 173.5V180.6M1428.5 172.8V181.9M1429.5 174.6V180.1M1430.5 176.9V180.4M1431.5 177.2V180.6M1432.5 172.5V181.9M1433.5 171.5V180.4M1434.5 175.8V180.4" stroke="#FAD600" stroke-width="1"/><path d="M613.5 178.3V158.3M612.5 178.3V195.3M614.5 178.3V169.3M611.5 178.3V186.8M747.5 178.3V162.3M746.5 178.3V185.3M748.5 178.3V171.10000000000002M745.5 178.3V181.8M673.5 178.3V168.3M672.5 178.3V182.3M674.5 178.3V173.8M671.5 178.3V180.3" stroke="#FAD600" stroke-width="1"/><rect x="337.5" y="237.5" width="1098.0" height="88.0" fill="none" stroke="#ABABAB" stroke-width="1"/><path d="M331.5 237.5H337.5M331.5 281.5H337.5M331.5 324.5H337.5M331.5 246.5H337.5M331.5 316.5H337.5" stroke="#E4CA40" stroke-width="1"/><text transform="translate(329.4 241.8) scale(0.95 1)" text-anchor="end" fill="#E4CA40" style="font-family:Liberation Sans,sans-serif;font-size:11.6px">1250</text><text transform="translate(329.4 285.8) scale(0.95 1)" text-anchor="end" fill="#E4CA40" style="font-family:Liberation Sans,sans-serif;font-size:11.6px">0</text><text transform="translate(329.4 329.8) scale(0.95 1)" text-anchor="end" fill="#E4CA40" style="font-family:Liberation Sans,sans-serif;font-size:11.6px">-1250</text><text transform="translate(298 283.0) rotate(-90)" text-anchor="middle" fill="#E4CA40" style="font-family:'Liberation Sans',sans-serif;font-size:10px">[ mV ]</text><path d="M338.5 282.1V287.0M339.5 283.9V287.5M340.5 280.0V287.7M341.5 284.3V288.3M342.5 282.3V290.6M343.5 283.0V287.6M344.5 283.4V287.0M345.5 283.3V289.9M346.5 282.4V287.7M347.5 283.3V286.7M348.5 282.7V290.9M349.5 282.8V286.7M350.5 281.5V287.5M351.5 279.5V287.4M352.5 283.3V287.7M353.5 283.1V288.8M354.5 284.9V288.1M355.5 284.1V287.9M356.5 282.6V288.3M357.5 282.8V287.8M358.5 284.0V289.1M359.5 284.0V288.0M360.5 283.2V292.5M361.5 283.8V289.8M362.5 280.6V288.3M363.5 282.4V288.1M364.5 284.2V288.1M365.5 283.1V287.3M366.5 283.2V291.6M367.5 282.5V287.5M368.5 284.0V286.9M369.5 279.7V288.2M370.5 282.8V287.8M371.5 282.3V286.9M372.5 279.7V287.6M373.5 283.8V287.4M374.5 283.4V287.3M375.5 279.9V287.1M376.5 283.7V287.3M377.5 283.5V290.8M378.5 280.0V287.7M379.5 282.3V287.5M380.5 283.6V288.6M381.5 283.4V287.2M382.5 281.7V287.6M383.5 278.8V287.3M384.5 283.7V288.6M385.5 283.3V291.1M386.5 283.6V291.1M387.5 283.6V290.1M388.5 279.4V286.8M389.5 283.2V286.1M390.5 280.6V286.9M391.5 283.2V286.6M392.5 283.1V288.3M393.5 283.0V286.4M394.5 279.6V288.2M395.5 283.6V286.6M396.5 280.5V287.9M397.5 283.3V288.9M398.5 283.5V288.1M399.5 283.4V291.2M400.5 282.8V289.1M401.5 282.3V288.0M402.5 283.3V287.4M403.5 278.6V287.6M404.5 279.8V287.5M405.5 282.4V287.4M406.5 283.8V288.9M407.5 278.6V287.9M408.5 282.0V288.0M409.5 282.6V290.4M410.5 282.9V286.6M411.5 282.5V289.8M412.5 283.3V287.3M413.5 282.4V286.5M414.5 280.4V286.4M415.5 282.5V286.5M416.5 279.7V285.8M417.5 280.8V287.5M418.5 280.0V287.3M419.5 279.4V286.9M420.5 283.2V286.9M421.5 277.8V287.3M422.5 283.0V290.7M423.5 282.3V286.6M424.5 281.4V285.2M425.5 281.4V285.3M426.5 279.4V285.6M427.5 279.9V285.2M428.5 281.4V290.1M429.5 282.2V287.9M430.5 283.6V286.5M431.5 280.4V286.9M432.5 283.4V291.3M433.5 281.5V289.1M434.5 284.3V288.7M435.5 283.4V288.7M436.5 282.1V287.0M437.5 281.8V286.9M438.5 283.8V287.6M439.5 284.1V288.2M440.5 283.6V288.4M441.5 283.6V288.1M442.5 282.1V289.2M443.5 283.2V287.4M444.5 282.2V287.4M445.5 281.3V291.6M446.5 283.3V287.1M447.5 282.8V290.2M448.5 282.5V286.9M449.5 283.5V290.6M450.5 283.7V288.4M451.5 283.6V290.8M452.5 283.2V289.5M453.5 282.4V287.2M454.5 279.6V288.3M455.5 283.8V287.1M456.5 281.9V288.8M457.5 282.8V287.3M458.5 283.4V288.6M459.5 283.1V287.7M460.5 283.8V291.2M461.5 281.6V287.3M462.5 278.6V288.2M463.5 279.9V286.8M464.5 283.1V287.4M465.5 280.6V287.1M466.5 279.0V287.0M467.5 282.3V288.0M468.5 281.4V289.5M469.5 280.0V285.3M470.5 282.0V287.1M471.5 279.3V288.6M472.5 284.8V287.6M473.5 283.7V288.7M474.5 283.8V294.0M475.5 284.5V289.1M476.5 284.4V291.1M477.5 283.7V288.0M478.5 285.0V290.9M479.5 281.4V287.6M480.5 283.9V287.4M481.5 280.9V287.5M482.5 281.3V287.7M483.5 283.0V287.4M484.5 283.1V290.5M485.5 283.1V289.7M486.5 282.8V287.5M487.5 280.7V286.6M488.5 283.1V287.1M489.5 283.0V287.9M490.5 283.7V288.3M491.5 284.5V288.4M492.5 283.6V288.4M493.5 282.5V286.8M494.5 283.2V286.8M495.5 282.5V291.5M496.5 282.8V287.2M497.5 281.4V288.9M498.5 282.8V288.5M499.5 280.4V287.2M500.5 283.8V291.6M501.5 283.3V287.9M502.5 282.2V290.3M503.5 282.6V288.1M504.5 283.1V288.1M505.5 282.0V288.0M506.5 284.0V287.4M507.5 283.4V287.2M508.5 283.9V288.2M509.5 284.0V289.4M510.5 283.2V291.7M511.5 283.1V287.6M512.5 282.4V286.8M513.5 279.0V286.8M514.5 282.4V287.9M515.5 281.3V289.6M516.5 281.3V290.9M517.5 282.1V285.2M518.5 282.6V286.6M519.5 282.4V286.9M520.5 284.0V290.2M521.5 283.4V287.6M522.5 283.8V288.0M523.5 283.9V289.0M524.5 279.2V287.5M525.5 284.2V287.9M526.5 283.8V288.3M527.5 283.9V288.3M528.5 282.9V289.3M529.5 284.3V290.1M530.5 283.6V289.4M531.5 284.4V291.5M532.5 284.2V287.6M533.5 283.7V289.7M534.5 284.0V287.5M535.5 281.2V288.5M536.5 284.1V287.8M537.5 284.0V288.1M538.5 281.2V287.2M539.5 284.3V287.6M540.5 284.0V287.7M541.5 283.7V292.0M542.5 284.8V288.4M543.5 284.2V289.2M544.5 279.5V289.2M545.5 284.5V292.7M546.5 284.6V288.1M547.5 283.7V288.0M548.5 283.1V287.2M549.5 283.0V286.3M550.5 283.2V286.2M551.5 281.9V288.1M552.5 278.7V286.3M553.5 283.1V286.5M554.5 282.8V290.6M555.5 283.5V286.8M556.5 283.8V286.6M557.5 283.6V287.1M558.5 283.8V289.8M559.5 283.5V287.8M560.5 284.0V287.9M561.5 284.8V289.0M562.5 284.4V289.5M563.5 284.6V287.7M564.5 282.8V287.2M565.5 280.4V287.2M566.5 282.4V286.9M567.5 281.1V285.2M568.5 281.4V289.6M569.5 281.4V288.1M570.5 281.5V287.8M571.5 281.9V284.9M572.5 278.2V285.9M573.5 282.4V287.1M574.5 282.0V289.6M575.5 278.7V286.7M576.5 282.9V286.2M577.5 281.5V286.1M578.5 282.1V287.4M579.5 282.4V287.5M580.5 277.9V286.3M581.5 282.5V289.2M582.5 282.2V290.5M583.5 279.0V286.1M584.5 280.2V286.1M585.5 282.1V285.9M586.5 282.1V286.2M587.5 283.4V289.4M588.5 281.8V287.1M589.5 282.4V290.7M590.5 282.6V292.2M591.5 282.2V287.7M592.5 282.3V289.6M593.5 283.9V287.8M594.5 283.3V288.8M595.5 280.9V288.1M596.5 283.2V288.3M597.5 281.9V287.7M598.5 282.9V289.2M599.5 278.5V286.9M600.5 283.4V286.8M601.5 283.7V287.5M602.5 284.1V290.1M603.5 283.4V286.5M604.5 280.0V287.5M605.5 284.0V287.7M606.5 283.9V287.6M607.5 282.7V287.4M608.5 280.3V287.3M609.5 282.5V286.7M610.5 282.6V287.0M611.5 282.2V288.1M612.5 283.9V290.3M613.5 281.3V288.5M614.5 283.6V289.3M615.5 282.9V289.0M616.5 280.7V288.5M617.5 284.1V289.5M618.5 282.8V289.3M619.5 283.8V291.1M620.5 284.2V290.9M621.5 282.7V288.4M622.5 283.4V288.3M623.5 283.9V287.3M624.5 284.4V291.2M625.5 280.3V287.0M626.5 283.4V288.0M627.5 284.3V287.3M628.5 284.0V288.0M629.5 283.7V292.6M630.5 284.1V287.8M631.5 284.0V287.7M632.5 283.9V288.6M633.5 284.3V287.6M634.5 282.5V289.2M635.5 284.6V287.9M636.5 280.9V287.9M637.5 280.2V288.2M638.5 283.4V290.6M639.5 283.6V288.4M640.5 283.1V287.2M641.5 281.4V286.0M642.5 283.9V287.5M643.5 283.4V288.0M644.5 283.5V289.8M645.5 284.8V288.2M646.5 284.6V290.4M647.5 282.5V289.1M648.5 282.6V291.9M649.5 284.3V287.8M650.5 284.7V287.9M651.5 280.6V288.0M652.5 282.9V289.4M653.5 285.0V292.1M654.5 283.4V292.4M655.5 282.4V286.3M656.5 279.8V288.4M657.5 283.3V287.1M658.5 283.6V288.3M659.5 283.5V287.4M660.5 283.7V286.8M661.5 278.5V288.3M662.5 278.3V286.7M663.5 283.2V287.2M664.5 283.2V286.4M665.5 281.2V287.9M666.5 280.0V287.5M667.5 280.4V287.9M668.5 283.2V291.4M669.5 282.8V287.0M670.5 281.0V287.7M671.5 284.3V287.6M672.5 284.4V287.9M673.5 283.8V287.7M674.5 284.3V290.8M675.5 283.6V289.4M676.5 284.7V288.3M677.5 283.1V292.2M678.5 284.6V288.4M679.5 283.2V287.0M680.5 280.2V287.1M681.5 278.8V287.0M682.5 283.3V287.1M683.5 282.1V288.5M684.5 283.8V288.1M685.5 284.5V291.5M686.5 283.8V290.1M687.5 282.6V287.7M688.5 283.4V290.1M689.5 283.7V290.0M690.5 282.4V287.4M691.5 283.8V287.0M692.5 278.3V286.8M693.5 283.7V287.3M694.5 283.9V286.8M695.5 283.8V288.4M696.5 283.7V288.9M697.5 283.4V287.2M698.5 284.0V287.5M699.5 284.3V288.5M700.5 282.9V291.0M701.5 281.4V286.9M702.5 281.7V286.8M703.5 280.0V287.7M704.5 283.2V286.9M705.5 283.4V287.6M706.5 281.4V287.4M707.5 281.4V286.4M708.5 281.9V287.9M709.5 281.4V286.5M710.5 283.1V287.2M711.5 281.0V287.0M712.5 279.7V286.9M713.5 278.9V286.5M714.5 283.7V287.0M715.5 281.5V287.6M716.5 284.6V289.2M717.5 284.6V288.4M718.5 283.4V288.5M719.5 282.3V291.7M720.5 278.6V285.9M721.5 283.7V287.5M722.5 282.8V287.7M723.5 281.7V286.8M724.5 280.2V286.8M725.5 283.4V286.9M726.5 280.5V287.8M727.5 282.9V290.1M728.5 281.8V287.9M729.5 281.4V286.7M730.5 282.4V286.5M731.5 279.5V286.6M732.5 282.1V287.7M733.5 283.0V291.4M734.5 283.6V288.4M735.5 280.6V287.2M736.5 283.4V290.2M737.5 280.6V287.0M738.5 283.8V291.2M739.5 282.2V286.8M740.5 283.1V287.4M741.5 283.3V287.1M742.5 281.2V286.7M743.5 281.9V290.0M744.5 281.8V287.3M745.5 278.9V287.8M746.5 282.9V287.9M747.5 282.7V292.0M748.5 283.3V289.1M749.5 283.6V287.0M750.5 283.7V289.9M751.5 282.0V287.0M752.5 278.9V287.9M753.5 283.8V287.1M754.5 279.3V286.9M755.5 283.2V288.2M756.5 283.5V289.2M757.5 282.0V287.4M758.5 283.2V290.0M759.5 283.9V287.1M760.5 284.1V287.5M761.5 284.0V287.7M762.5 284.4V288.1M763.5 284.4V287.5M764.5 283.5V290.1M765.5 283.1V287.7M766.5 277.9V288.0M767.5 282.7V288.7M768.5 283.8V287.2M769.5 279.8V287.2M770.5 282.3V288.1M771.5 283.0V286.9M772.5 282.1V286.9M773.5 282.9V290.9M774.5 283.8V288.2M775.5 283.4V291.0M776.5 281.1V288.3M777.5 283.6V290.8M778.5 283.1V289.2M779.5 282.8V286.4M780.5 282.8V286.1M781.5 279.1V286.3M782.5 282.6V289.9M783.5 283.3V287.2M784.5 281.5V286.8M785.5 282.7V287.4M786.5 283.0V291.3M787.5 280.2V287.1M788.5 283.4V288.3M789.5 282.6V287.1M790.5 284.0V291.0M791.5 283.9V287.2M792.5 283.6V288.4M793.5 280.7V288.5M794.5 284.1V287.6M795.5 284.1V287.2M796.5 280.0V288.4M797.5 283.6V287.1M798.5 279.9V288.0M799.5 279.6V287.7M800.5 282.7V286.7M801.5 283.2V287.7M802.5 283.6V287.5M803.5 283.4V291.6M804.5 281.2V287.6M805.5 283.9V287.0M806.5 282.6V286.8M807.5 283.5V287.4M808.5 282.3V289.9M809.5 283.3V286.5M810.5 283.0V286.6M811.5 282.8V291.9M812.5 283.4V289.6M813.5 281.6V286.9M814.5 278.8V286.2M815.5 281.7V287.5M816.5 281.5V287.2M817.5 280.2V286.5M818.5 282.3V289.4M819.5 277.6V287.2M820.5 282.4V286.6M821.5 282.0V288.5M822.5 281.3V287.2M823.5 282.7V286.9M824.5 279.8V287.8M825.5 283.3V287.4M826.5 282.5V288.3M827.5 283.4V289.1M828.5 283.4V286.9M829.5 278.6V286.7M830.5 282.1V289.8M831.5 282.8V287.5M832.5 282.6V288.3M833.5 280.2V289.0M834.5 283.4V289.6M835.5 281.7V287.4M836.5 278.5V287.7M837.5 284.0V290.0M838.5 284.7V292.6M839.5 283.5V288.2M840.5 279.7V286.6M841.5 280.3V286.9M842.5 283.8V287.2M843.5 282.9V289.7M844.5 283.0V286.9M845.5 282.4V287.5M846.5 284.3V287.7M847.5 282.3V288.0M848.5 280.1V287.6M849.5 283.7V290.8M850.5 283.7V288.1M851.5 282.4V290.7M852.5 283.8V289.5M853.5 281.6V287.9M854.5 280.4V287.5M855.5 284.2V288.0M856.5 283.7V287.7M857.5 279.7V288.0M858.5 284.2V288.5M859.5 280.4V287.9M860.5 284.6V288.2M861.5 283.6V287.6M862.5 284.6V287.6M863.5 281.3V287.6M864.5 284.6V288.1M865.5 284.3V293.2M866.5 284.1V292.2M867.5 284.0V288.8M868.5 285.0V291.3M869.5 283.9V288.7M870.5 279.1V287.0M871.5 283.9V288.1M872.5 283.3V288.2M873.5 283.8V291.7M874.5 283.4V288.9M875.5 280.8V287.1M876.5 283.5V287.1M877.5 280.0V286.9M878.5 283.7V291.7M879.5 283.4V291.2M880.5 283.5V291.7M881.5 281.9V286.5M882.5 283.3V289.5M883.5 283.2V290.3M884.5 283.2V287.5M885.5 283.4V286.5M886.5 282.3V286.6M887.5 283.0V289.8M888.5 283.1V287.6M889.5 282.9V289.8M890.5 280.7V287.9M891.5 282.7V286.5M892.5 280.4V288.5M893.5 281.1V287.7M894.5 278.9V288.6M895.5 281.6V287.9M896.5 283.4V291.5M897.5 283.6V286.9M898.5 283.3V287.0M899.5 281.5V287.7M900.5 282.4V286.6M901.5 283.2V291.0M902.5 281.7V287.0M903.5 283.1V287.5M904.5 284.5V287.5M905.5 284.2V291.9M906.5 284.4V289.3M907.5 284.4V289.4M908.5 284.0V292.0M909.5 283.2V289.6M910.5 284.4V290.5M911.5 283.7V288.3M912.5 283.2V287.4M913.5 282.5V286.3M914.5 279.8V286.5M915.5 282.1V287.0M916.5 281.6V287.2M917.5 283.6V287.9M918.5 283.6V288.7M919.5 283.1V287.0M920.5 283.8V289.3M921.5 281.7V287.6M922.5 283.3V287.9M923.5 282.5V287.4M924.5 281.7V285.9M925.5 282.4V288.2M926.5 277.9V287.1M927.5 278.7V286.4M928.5 280.6V287.7M929.5 282.9V287.4M930.5 281.8V286.4M931.5 282.8V290.9M932.5 283.2V290.3M933.5 283.5V289.1M934.5 283.5V288.2M935.5 283.7V287.6M936.5 284.8V288.2M937.5 277.8V287.6M938.5 283.4V286.7M939.5 278.4V286.5M940.5 278.4V286.8M941.5 282.3V291.2M942.5 282.4V286.5M943.5 279.7V287.3M944.5 282.5V287.2M945.5 283.0V287.1M946.5 282.8V289.0M947.5 283.0V287.2M948.5 281.6V290.2M949.5 285.0V290.4M950.5 284.2V292.6M951.5 282.5V289.3M952.5 281.2V287.7M953.5 283.1V287.7M954.5 282.3V288.5M955.5 281.8V287.9M956.5 281.8V291.6M957.5 283.7V287.0M958.5 281.8V288.4M959.5 283.8V287.0M960.5 281.8V287.2M961.5 285.1V288.4M962.5 284.2V289.4M963.5 282.5V288.9M964.5 281.5V288.9M965.5 285.1V289.5M966.5 284.9V288.1M967.5 285.1V288.7M968.5 284.4V288.6M969.5 284.3V291.3M970.5 284.5V288.2M971.5 280.0V287.7M972.5 279.8V288.0M973.5 280.9V287.8M974.5 283.3V288.0M975.5 284.3V287.6M976.5 280.4V287.4M977.5 284.0V291.4M978.5 284.0V287.3M979.5 283.0V287.4M980.5 283.1V287.3M981.5 282.5V290.0M982.5 283.3V287.6M983.5 279.7V288.2M984.5 281.3V288.5M985.5 281.0V287.4M986.5 283.7V292.5M987.5 284.1V289.3M988.5 283.0V286.8M989.5 283.1V289.7M990.5 283.6V291.6M991.5 282.5V290.6M992.5 281.5V286.1M993.5 283.6V286.8M994.5 283.7V288.0M995.5 282.9V287.0M996.5 281.0V287.0M997.5 283.6V287.1M998.5 283.6V286.9M999.5 282.4V289.2M1000.5 284.2V287.6M1001.5 283.8V288.9M1002.5 283.6V291.5M1003.5 284.4V291.3M1004.5 284.2V287.9M1005.5 280.2V288.1M1006.5 285.0V289.9M1007.5 284.7V289.3M1008.5 281.7V288.4M1009.5 284.6V288.9M1010.5 280.9V288.0M1011.5 283.9V292.3M1012.5 281.5V291.0M1013.5 283.5V289.0M1014.5 282.5V287.9M1015.5 282.7V286.1M1016.5 283.0V291.0M1017.5 281.8V286.9M1018.5 283.0V287.7M1019.5 284.0V288.9M1020.5 282.7V288.6M1021.5 283.9V287.0M1022.5 279.9V287.1M1023.5 283.5V288.5M1024.5 280.2V288.7M1025.5 283.1V287.6M1026.5 282.9V288.9M1027.5 277.5V287.4M1028.5 281.9V287.7M1029.5 278.8V286.1M1030.5 282.1V288.4M1031.5 281.8V286.7M1032.5 282.0V289.7M1033.5 281.4V287.0M1034.5 282.7V286.5M1035.5 282.2V287.0M1036.5 283.5V287.0M1037.5 283.6V287.4M1038.5 284.4V287.8M1039.5 283.8V286.8M1040.5 282.3V287.4M1041.5 283.2V286.5M1042.5 281.7V286.6M1043.5 278.6V288.0M1044.5 283.8V291.7M1045.5 284.7V288.9M1046.5 284.8V288.7M1047.5 284.3V292.5M1048.5 284.7V290.8M1049.5 283.6V289.9M1050.5 284.8V290.9M1051.5 282.8V288.1M1052.5 285.1V291.4M1053.5 284.2V289.4M1054.5 283.9V288.1M1055.5 279.8V288.3M1056.5 283.5V290.0M1057.5 284.1V291.7M1058.5 283.8V292.4M1059.5 281.0V287.3M1060.5 279.8V286.6M1061.5 283.2V287.1M1062.5 283.2V287.0M1063.5 278.0V286.5M1064.5 282.7V285.9M1065.5 283.4V288.9M1066.5 282.4V288.6M1067.5 278.4V286.7M1068.5 283.1V286.9M1069.5 282.1V289.4M1070.5 282.3V286.9M1071.5 281.9V287.7M1072.5 284.5V287.4M1073.5 284.2V290.9M1074.5 279.8V287.9M1075.5 283.0V287.1M1076.5 283.1V287.1M1077.5 283.3V291.6M1078.5 283.8V290.5M1079.5 284.5V289.3M1080.5 283.8V288.3M1081.5 284.2V290.2M1082.5 280.6V288.2M1083.5 283.7V292.4M1084.5 278.7V287.4M1085.5 283.0V286.5M1086.5 283.3V287.4M1087.5 283.4V286.4M1088.5 282.4V287.6M1089.5 284.2V289.8M1090.5 282.8V286.9M1091.5 284.5V292.3M1092.5 282.8V288.7M1093.5 284.7V288.8M1094.5 283.4V287.0M1095.5 283.5V290.2M1096.5 282.1V286.5M1097.5 283.3V287.5M1098.5 282.8V288.6M1099.5 283.3V287.8M1100.5 282.6V286.7M1101.5 282.0V289.2M1102.5 281.6V288.9M1103.5 283.3V287.3M1104.5 281.0V287.5M1105.5 280.4V287.5M1106.5 284.0V288.7M1107.5 283.3V288.4M1108.5 284.1V291.3M1109.5 283.7V290.7M1110.5 280.6V288.3M1111.5 279.4V287.0M1112.5 282.4V288.2M1113.5 282.3V289.5M1114.5 278.5V286.4M1115.5 283.3V287.0M1116.5 284.2V287.5M1117.5 279.1V287.4M1118.5 279.3V285.9M1119.5 282.7V286.0M1120.5 282.7V286.6M1121.5 282.4V286.7M1122.5 282.3V287.0M1123.5 283.0V286.0M1124.5 283.0V286.8M1125.5 281.6V286.0M1126.5 282.8V286.3M1127.5 283.8V289.9M1128.5 282.7V287.5M1129.5 283.7V287.4M1130.5 283.7V286.8M1131.5 283.3V292.3M1132.5 282.0V290.9M1133.5 281.1V287.1M1134.5 283.5V291.8M1135.5 284.0V289.4M1136.5 282.4V289.6M1137.5 283.1V288.0M1138.5 283.7V288.5M1139.5 284.4V288.3M1140.5 283.6V288.7M1141.5 284.1V287.4M1142.5 283.7V290.4M1143.5 284.5V288.7M1144.5 282.4V286.7M1145.5 282.8V287.7M1146.5 281.7V287.5M1147.5 283.0V290.3M1148.5 282.4V287.9M1149.5 284.3V289.3M1150.5 280.4V287.7M1151.5 283.8V291.6M1152.5 284.1V287.9M1153.5 278.8V287.4M1154.5 283.7V287.9M1155.5 282.4V289.6M1156.5 284.9V289.0M1157.5 285.2V291.9M1158.5 280.4V288.3M1159.5 284.4V287.8M1160.5 284.4V288.8M1161.5 284.4V288.5M1162.5 284.8V288.4M1163.5 279.7V286.7M1164.5 282.1V286.5M1165.5 282.3V287.4M1166.5 282.0V286.4M1167.5 280.9V286.3M1168.5 281.0V287.8M1169.5 282.6V287.0M1170.5 282.9V286.6M1171.5 278.9V286.4M1172.5 282.7V285.7M1173.5 278.0V285.9M1174.5 282.2V286.8M1175.5 283.7V288.1M1176.5 283.1V292.2M1177.5 284.2V289.2M1178.5 283.0V287.2M1179.5 283.4V287.1M1180.5 283.6V288.1M1181.5 284.0V288.2M1182.5 280.9V287.9M1183.5 284.1V289.3M1184.5 284.3V288.2M1185.5 285.2V288.9M1186.5 283.8V289.3M1187.5 284.7V292.2M1188.5 283.9V290.0M1189.5 284.8V291.5M1190.5 283.5V291.1M1191.5 283.4V289.8M1192.5 281.2V288.0M1193.5 284.4V290.5M1194.5 283.1V287.0M1195.5 283.9V287.3M1196.5 283.3V287.9M1197.5 284.3V288.2M1198.5 283.2V287.8M1199.5 283.1V287.0M1200.5 278.6V286.6M1201.5 283.0V286.8M1202.5 279.3V287.4M1203.5 283.5V288.6M1204.5 282.9V287.9M1205.5 282.9V287.7M1206.5 283.7V287.3M1207.5 283.0V286.6M1208.5 281.2V288.5M1209.5 283.8V288.1M1210.5 283.1V290.6M1211.5 282.5V290.3M1212.5 279.9V287.0M1213.5 282.3V286.6M1214.5 283.2V287.0M1215.5 281.8V290.1M1216.5 281.6V285.6M1217.5 282.8V286.5M1218.5 282.8V286.7M1219.5 282.4V286.7M1220.5 282.6V287.2M1221.5 282.7V287.8M1222.5 281.5V291.9M1223.5 282.9V287.4M1224.5 282.4V287.5M1225.5 283.4V288.3M1226.5 282.6V287.2M1227.5 283.3V286.3M1228.5 282.1V286.2M1229.5 282.6V289.4M1230.5 282.4V287.9M1231.5 283.7V286.8M1232.5 282.3V286.8M1233.5 283.8V291.5M1234.5 283.1V289.1M1235.5 280.8V287.5M1236.5 282.9V287.6M1237.5 283.3V286.9M1238.5 283.3V287.6M1239.5 284.7V288.1M1240.5 283.8V292.6M1241.5 278.4V287.0M1242.5 281.4V287.9M1243.5 284.4V288.9M1244.5 284.6V289.0M1245.5 284.3V288.4M1246.5 283.9V288.0M1247.5 284.8V292.8M1248.5 282.7V288.6M1249.5 280.0V286.6M1250.5 282.3V291.7M1251.5 282.0V289.0M1252.5 282.3V286.6M1253.5 282.1V290.3M1254.5 283.6V289.2M1255.5 283.4V290.2M1256.5 280.6V288.0M1257.5 283.3V291.4M1258.5 281.9V285.9M1259.5 283.4V287.6M1260.5 284.5V288.6M1261.5 283.9V287.5M1262.5 283.0V288.8M1263.5 284.4V289.1M1264.5 284.1V290.5M1265.5 283.8V288.8M1266.5 284.2V291.9M1267.5 284.4V289.8M1268.5 283.5V288.3M1269.5 284.5V288.1M1270.5 282.8V288.1M1271.5 283.7V288.0M1272.5 284.1V287.8M1273.5 280.7V288.2M1274.5 279.3V287.5M1275.5 279.7V288.6M1276.5 284.0V288.4M1277.5 283.7V287.9M1278.5 282.3V291.7M1279.5 279.6V286.5M1280.5 282.9V288.3M1281.5 282.9V291.2M1282.5 283.5V288.0M1283.5 281.2V287.0M1284.5 283.3V287.3M1285.5 279.4V287.2M1286.5 281.3V287.9M1287.5 284.0V289.9M1288.5 280.5V288.4M1289.5 279.6V288.6M1290.5 283.7V288.8M1291.5 283.2V287.1M1292.5 283.1V290.5M1293.5 281.8V287.8M1294.5 283.8V287.5M1295.5 282.7V289.0M1296.5 279.7V287.6M1297.5 281.2V287.6M1298.5 283.1V287.3M1299.5 281.1V288.1M1300.5 283.6V289.1M1301.5 283.7V289.1M1302.5 284.6V290.5M1303.5 284.7V289.5M1304.5 281.8V288.2M1305.5 281.5V288.6M1306.5 283.9V288.4M1307.5 281.5V287.7M1308.5 282.0V288.9M1309.5 284.3V292.4M1310.5 283.1V289.4M1311.5 284.7V290.7M1312.5 285.0V289.3M1313.5 282.6V288.6M1314.5 281.1V289.1M1315.5 283.9V290.0M1316.5 284.6V290.5M1317.5 283.0V288.0M1318.5 283.7V289.8M1319.5 283.5V287.3M1320.5 281.7V287.0M1321.5 281.5V291.4M1322.5 282.4V288.0M1323.5 281.7V286.9M1324.5 283.2V287.8M1325.5 284.6V287.7M1326.5 283.5V287.2M1327.5 283.1V286.9M1328.5 281.9V285.8M1329.5 282.7V290.1M1330.5 283.2V286.6M1331.5 283.0V286.9M1332.5 282.3V289.7M1333.5 282.9V291.0M1334.5 283.4V289.2M1335.5 281.8V287.9M1336.5 283.0V287.4M1337.5 281.4V286.8M1338.5 280.1V287.8M1339.5 283.4V287.5M1340.5 283.4V291.3M1341.5 284.5V287.5M1342.5 282.2V291.3M1343.5 282.1V287.7M1344.5 283.9V288.1M1345.5 280.9V287.5M1346.5 283.6V286.8M1347.5 283.0V289.7M1348.5 283.3V290.6M1349.5 282.7V287.0M1350.5 282.6V286.6M1351.5 282.9V290.9M1352.5 280.5V286.7M1353.5 283.0V289.8M1354.5 279.7V286.6M1355.5 282.8V287.3M1356.5 283.2V287.3M1357.5 280.5V287.5M1358.5 284.3V291.1M1359.5 283.1V289.6M1360.5 284.0V291.0M1361.5 283.6V289.1M1362.5 283.2V287.9M1363.5 284.3V290.6M1364.5 284.4V287.6M1365.5 284.1V288.2M1366.5 283.5V288.1M1367.5 282.8V290.7M1368.5 281.4V289.6M1369.5 281.5V287.0M1370.5 280.9V286.5M1371.5 282.7V287.8M1372.5 283.3V286.5M1373.5 283.3V290.2M1374.5 282.0V287.1M1375.5 281.2V285.8M1376.5 282.9V286.5M1377.5 283.0V286.9M1378.5 282.6V287.4M1379.5 284.0V288.7M1380.5 284.1V287.2M1381.5 281.1V288.7M1382.5 283.4V287.5M1383.5 279.8V287.3M1384.5 282.6V287.0M1385.5 282.8V288.0M1386.5 283.7V288.5M1387.5 283.9V291.5M1388.5 282.9V289.6M1389.5 283.4V291.5M1390.5 284.2V288.6M1391.5 284.3V288.4M1392.5 283.4V287.1M1393.5 281.9V288.2M1394.5 280.0V287.4M1395.5 281.5V287.9M1396.5 283.9V290.0M1397.5 284.0V287.9M1398.5 282.3V288.1M1399.5 284.2V289.1M1400.5 284.1V288.0M1401.5 280.2V287.5M1402.5 284.2V288.8M1403.5 283.9V290.7M1404.5 284.6V288.5M1405.5 284.2V287.6M1406.5 282.8V292.4M1407.5 282.8V286.8M1408.5 283.2V286.6M1409.5 280.3V288.0M1410.5 283.3V288.1M1411.5 280.7V289.1M1412.5 283.5V288.8M1413.5 279.9V288.0M1414.5 283.8V288.6M1415.5 282.9V287.3M1416.5 282.7V287.6M1417.5 281.6V287.1M1418.5 283.6V288.4M1419.5 284.7V289.6M1420.5 284.5V290.0M1421.5 281.2V288.1M1422.5 283.7V291.0M1423.5 282.9V291.3M1424.5 282.6V286.6M1425.5 283.0V287.7M1426.5 283.3V290.7M1427.5 283.9V286.9M1428.5 283.5V289.0M1429.5 283.8V288.6M1430.5 283.3V289.9M1431.5 282.7V290.5M1432.5 281.6V287.1M1433.5 283.0V287.5M1434.5 283.7V287.3" stroke="#FAD600" stroke-width="1"/><path d="M614.5 285.5V268.0M613.5 285.5V298.0M615.5 285.5V277.625M612.5 285.5V291.75M747.5 285.5V272.5M746.5 285.5V291.5M748.5 285.5V279.65M745.5 285.5V288.5M675.5 285.5V278.0M674.5 285.5V289.5M676.5 285.5V282.125M673.5 285.5V287.5" stroke="#FAD600" stroke-width="1"/><path d="M1432.5 345.5 H1435.5 V433.5 H337.5 V345.5" fill="none" stroke="#ABABAB" stroke-width="1"/><path d="M331.5 345.5H337.5M331.5 389.5H337.5M331.5 432.5H337.5M331.5 354.5H337.5M331.5 424.5H337.5" stroke="#E4CA40" stroke-width="1"/><text transform="translate(329.4 349.8) scale(0.95 1)" text-anchor="end" fill="#E4CA40" style="font-family:Liberation Sans,sans-serif;font-size:11.6px">1250</text><text transform="translate(329.4 393.8) scale(0.95 1)" text-anchor="end" fill="#E4CA40" style="font-family:Liberation Sans,sans-serif;font-size:11.6px">0</text><text transform="translate(329.4 437.8) scale(0.95 1)" text-anchor="end" fill="#E4CA40" style="font-family:Liberation Sans,sans-serif;font-size:11.6px">-1250</text><text transform="translate(298 391.0) rotate(-90)" text-anchor="middle" fill="#E4CA40" style="font-family:'Liberation Sans',sans-serif;font-size:10px">[ mV ]</text><path d="M338.5 386.3V393.5M339.5 389.7V394.3M340.5 386.1V393.9M341.5 389.0V394.8M342.5 389.4V393.8M343.5 389.5V393.5M344.5 389.5V394.6M345.5 385.1V393.5M346.5 388.1V394.3M347.5 389.2V393.2M348.5 389.5V394.5M349.5 388.8V396.5M350.5 389.7V393.7M351.5 385.7V395.6M352.5 389.8V397.6M353.5 388.6V394.1M354.5 389.9V393.6M355.5 390.4V397.5M356.5 390.5V394.5M357.5 390.1V394.2M358.5 388.9V392.1M359.5 388.1V391.9M360.5 384.8V391.6M361.5 385.3V392.8M362.5 386.8V392.3M363.5 389.3V392.6M364.5 389.7V393.0M365.5 387.0V393.2M366.5 388.9V392.9M367.5 389.7V392.7M368.5 389.5V393.1M369.5 389.7V397.8M370.5 387.0V394.1M371.5 389.1V393.3M372.5 390.4V394.5M373.5 390.3V395.1M374.5 389.2V397.4M375.5 390.4V396.3M376.5 389.7V396.9M377.5 386.1V394.6M378.5 390.0V394.8M379.5 389.2V393.8M380.5 387.1V394.2M381.5 388.5V393.7M382.5 390.4V395.4M383.5 386.6V394.9M384.5 390.6V394.1M385.5 389.7V395.0M386.5 391.2V395.3M387.5 385.3V395.6M388.5 389.7V397.1M389.5 390.7V394.3M390.5 390.7V394.5M391.5 390.3V395.1M392.5 390.8V394.4M393.5 391.1V396.1M394.5 388.5V395.6M395.5 390.5V398.7M396.5 389.8V394.0M397.5 388.9V393.4M398.5 388.6V395.0M399.5 386.2V393.5M400.5 389.8V398.0M401.5 390.3V395.0M402.5 390.0V395.2M403.5 391.0V398.7M404.5 389.3V394.8M405.5 388.5V393.6M406.5 389.9V395.4M407.5 390.8V394.5M408.5 389.4V394.6M409.5 390.5V393.7M410.5 389.4V393.6M411.5 388.1V397.5M412.5 389.0V395.9M413.5 385.2V392.7M414.5 386.5V392.8M415.5 388.3V396.6M416.5 388.5V393.2M417.5 389.4V394.5M418.5 390.1V395.0M419.5 389.3V394.0M420.5 389.7V398.7M421.5 388.0V393.1M422.5 386.7V393.5M423.5 386.7V394.0M424.5 387.4V393.6M425.5 386.6V392.6M426.5 388.8V394.1M427.5 389.7V393.2M428.5 389.2V393.1M429.5 389.2V395.4M430.5 389.1V393.5M431.5 387.8V393.2M432.5 390.5V393.7M433.5 389.1V396.8M434.5 388.5V396.2M435.5 389.0V395.0M436.5 388.6V394.5M437.5 389.1V393.5M438.5 388.8V391.9M439.5 385.5V392.4M440.5 388.1V395.5M441.5 388.8V392.2M442.5 388.5V391.7M443.5 389.0V392.5M444.5 387.4V393.6M445.5 389.6V395.3M446.5 388.9V393.4M447.5 388.5V394.8M448.5 390.2V393.3M449.5 389.9V396.8M450.5 389.5V393.0M451.5 389.5V397.6M452.5 389.5V393.6M453.5 389.6V396.9M454.5 388.8V396.6M455.5 387.5V393.0M456.5 386.8V393.2M457.5 388.7V392.9M458.5 388.0V394.2M459.5 388.3V392.2M460.5 388.5V392.2M461.5 384.8V392.1M462.5 387.9V391.8M463.5 386.5V391.7M464.5 388.4V392.4M465.5 389.3V393.2M466.5 385.5V392.4M467.5 389.2V392.4M468.5 388.9V392.3M469.5 390.9V395.6M470.5 390.2V395.5M471.5 389.7V394.8M472.5 390.5V393.4M473.5 389.1V395.2M474.5 387.3V392.5M475.5 389.6V393.5M476.5 389.7V395.4M477.5 389.2V394.4M478.5 387.9V394.1M479.5 389.2V393.5M480.5 389.5V395.5M481.5 388.7V393.7M482.5 390.2V395.4M483.5 387.5V393.0M484.5 389.1V396.8M485.5 386.3V393.0M486.5 385.5V393.7M487.5 388.2V393.2M488.5 389.2V396.6M489.5 387.7V397.6M490.5 389.3V394.9M491.5 388.1V392.6M492.5 386.5V393.3M493.5 389.0V394.6M494.5 388.6V393.4M495.5 386.6V393.9M496.5 388.8V392.8M497.5 388.5V393.5M498.5 388.6V392.3M499.5 388.6V396.3M500.5 388.2V394.1M501.5 390.3V393.9M502.5 390.3V394.3M503.5 390.0V395.2M504.5 390.6V395.6M505.5 387.8V393.6M506.5 389.6V393.3M507.5 389.6V393.2M508.5 390.1V393.2M509.5 389.7V395.9M510.5 387.6V393.1M511.5 388.7V392.9M512.5 389.9V394.2M513.5 389.7V394.6M514.5 388.3V394.5M515.5 388.0V393.8M516.5 387.4V395.0M517.5 389.5V397.4M518.5 385.8V393.7M519.5 388.3V395.2M520.5 386.6V393.0M521.5 386.8V392.2M522.5 387.8V391.8M523.5 387.5V393.7M524.5 382.1V392.0M525.5 388.2V394.1M526.5 388.0V392.0M527.5 386.6V392.3M528.5 388.6V395.6M529.5 386.6V393.3M530.5 389.6V397.2M531.5 384.9V393.2M532.5 390.5V396.1M533.5 387.6V394.2M534.5 386.6V393.9M535.5 389.2V393.2M536.5 389.6V394.6M537.5 384.9V395.3M538.5 386.1V393.6M539.5 386.6V394.3M540.5 390.8V396.9M541.5 391.4V395.1M542.5 386.7V393.1M543.5 389.2V392.9M544.5 388.1V392.6M545.5 388.5V392.4M546.5 389.1V392.9M547.5 385.6V394.3M548.5 383.9V393.7M549.5 385.0V393.7M550.5 387.5V393.4M551.5 387.6V394.3M552.5 387.9V393.4M553.5 386.5V393.7M554.5 389.5V392.6M555.5 389.2V394.7M556.5 388.4V397.2M557.5 384.5V393.5M558.5 388.2V394.3M559.5 388.6V392.7M560.5 389.4V392.9M561.5 389.0V395.1M562.5 389.2V396.2M563.5 387.3V393.9M564.5 389.4V393.7M565.5 388.8V393.1M566.5 389.9V396.9M567.5 389.3V392.9M568.5 388.4V392.7M569.5 388.6V395.1M570.5 386.1V393.1M571.5 386.6V393.2M572.5 389.5V394.1M573.5 390.7V394.8M574.5 390.3V394.4M575.5 390.1V396.7M576.5 386.5V394.7M577.5 391.5V400.3M578.5 388.7V395.3M579.5 391.6V400.0M580.5 390.2V396.7M581.5 387.0V395.8M582.5 388.9V397.9M583.5 386.6V391.4M584.5 387.7V391.2M585.5 383.8V392.6M586.5 388.4V393.8M587.5 388.3V394.2M588.5 388.7V394.5M589.5 385.7V393.7M590.5 389.9V394.2M591.5 388.2V393.2M592.5 387.5V393.1M593.5 390.1V393.1M594.5 387.3V397.5M595.5 388.8V394.9M596.5 390.8V396.7M597.5 389.8V394.5M598.5 386.2V393.2M599.5 387.1V393.0M600.5 389.0V392.3M601.5 388.9V392.6M602.5 388.8V392.2M603.5 388.9V392.3M604.5 388.0V392.7M605.5 388.3V392.1M606.5 388.2V395.1M607.5 388.4V394.8M608.5 388.7V392.3M609.5 388.6V393.8M610.5 387.9V392.1M611.5 388.7V392.7M612.5 389.5V394.3M613.5 390.1V393.6M614.5 389.9V396.4M615.5 389.5V392.8M616.5 389.3V392.9M617.5 389.4V394.1M618.5 385.7V393.4M619.5 389.7V393.4M620.5 389.0V396.2M621.5 389.4V397.1M622.5 385.9V393.0M623.5 388.4V393.8M624.5 390.0V397.8M625.5 388.6V395.5M626.5 387.6V395.7M627.5 390.2V393.9M628.5 388.7V394.8M629.5 388.9V392.4M630.5 387.4V393.7M631.5 389.0V393.4M632.5 389.6V393.9M633.5 386.8V393.3M634.5 388.6V394.1M635.5 389.9V396.7M636.5 388.8V393.8M637.5 388.2V393.8M638.5 390.3V394.7M639.5 390.3V395.7M640.5 389.5V393.9M641.5 389.5V393.4M642.5 384.4V394.4M643.5 390.2V393.7M644.5 389.6V395.0M645.5 389.4V397.0M646.5 389.0V394.4M647.5 385.7V394.6M648.5 388.4V391.9M649.5 388.7V394.3M650.5 389.8V397.0M651.5 387.7V394.3M652.5 389.9V393.1M653.5 388.6V393.0M654.5 389.1V395.5M655.5 389.7V392.8M656.5 385.2V393.4M657.5 389.2V393.2M658.5 389.7V393.2M659.5 384.4V394.3M660.5 388.5V392.7M661.5 389.0V393.0M662.5 389.5V394.2M663.5 389.4V393.2M664.5 386.6V393.7M665.5 390.8V394.7M666.5 389.6V393.5M667.5 388.9V396.6M668.5 389.2V394.1M669.5 388.8V393.6M670.5 389.9V396.4M671.5 388.8V393.3M672.5 387.5V394.6M673.5 389.7V394.9M674.5 386.2V393.8M675.5 388.9V395.9M676.5 389.6V392.9M677.5 387.9V393.1M678.5 388.2V392.5M679.5 387.6V393.0M680.5 389.4V397.4M681.5 389.4V392.7M682.5 384.4V392.3M683.5 387.9V391.9M684.5 388.7V393.7M685.5 388.2V392.4M686.5 388.6V391.8M687.5 388.1V396.1M688.5 387.6V391.5M689.5 388.2V393.0M690.5 388.2V391.5M691.5 387.4V392.8M692.5 388.8V393.5M693.5 389.9V394.3M694.5 389.1V394.0M695.5 390.3V394.4M696.5 390.4V395.1M697.5 390.1V397.0M698.5 390.3V394.1M699.5 389.0V394.7M700.5 390.3V393.8M701.5 388.2V394.2M702.5 389.8V394.0M703.5 391.2V394.3M704.5 390.5V394.0M705.5 388.3V393.8M706.5 389.9V394.1M707.5 390.7V394.4M708.5 389.1V393.3M709.5 389.8V393.6M710.5 389.3V394.7M711.5 391.9V395.6M712.5 391.4V395.7M713.5 392.0V398.4M714.5 391.8V395.8M715.5 390.7V393.7M716.5 387.3V393.2M717.5 389.1V393.3M718.5 389.8V394.1M719.5 389.3V396.2M720.5 390.0V395.0M721.5 390.5V399.0M722.5 391.2V394.9M723.5 389.8V394.2M724.5 389.8V398.2M725.5 390.5V394.1M726.5 389.5V394.8M727.5 390.4V398.0M728.5 390.3V395.1M729.5 390.5V398.9M730.5 389.9V393.3M731.5 388.3V392.8M732.5 388.6V393.2M733.5 386.6V392.9M734.5 389.1V392.3M735.5 389.0V395.9M736.5 388.5V392.3M737.5 387.1V391.5M738.5 387.3V391.0M739.5 387.0V391.6M740.5 387.5V391.1M741.5 388.5V391.6M742.5 387.8V392.7M743.5 388.4V395.8M744.5 386.1V392.2M745.5 386.4V392.2M746.5 385.4V393.4M747.5 387.6V394.2M748.5 385.1V393.9M749.5 387.5V392.3M750.5 385.6V392.4M751.5 387.8V393.5M752.5 389.3V397.6M753.5 388.8V397.6M754.5 387.7V392.7M755.5 389.7V393.7M756.5 389.2V393.0M757.5 389.3V395.9M758.5 385.1V393.8M759.5 385.9V393.6M760.5 389.4V397.3M761.5 389.6V393.2M762.5 389.4V394.1M763.5 389.3V393.1M764.5 388.7V393.1M765.5 387.1V392.7M766.5 389.6V394.6M767.5 390.0V395.2M768.5 389.7V397.2M769.5 388.6V393.8M770.5 388.1V393.1M771.5 387.0V393.3M772.5 388.3V394.3M773.5 384.5V394.0M774.5 386.3V393.5M775.5 390.1V393.2M776.5 388.1V392.8M777.5 389.2V397.5M778.5 389.1V395.6M779.5 387.3V392.5M780.5 385.1V392.8M781.5 389.1V393.6M782.5 389.5V393.3M783.5 388.4V394.1M784.5 389.7V393.5M785.5 389.4V394.5M786.5 388.9V398.2M787.5 389.3V393.3M788.5 385.7V392.4M789.5 389.0V396.4M790.5 389.4V394.0M791.5 388.1V395.0M792.5 390.2V396.9M793.5 389.6V394.9M794.5 390.1V393.7M795.5 389.9V395.9M796.5 389.4V396.3M797.5 386.1V394.0M798.5 390.3V397.7M799.5 389.6V393.5M800.5 390.8V394.5M801.5 390.4V395.1M802.5 390.1V394.0M803.5 389.5V393.2M804.5 388.9V392.4M805.5 383.6V392.3M806.5 389.2V397.5M807.5 388.8V393.4M808.5 388.8V393.5M809.5 388.5V393.1M810.5 389.3V392.4M811.5 389.3V394.1M812.5 388.3V393.5M813.5 389.7V394.8M814.5 389.3V394.3M815.5 391.2V395.4M816.5 390.6V395.4M817.5 387.1V394.1M818.5 386.2V393.4M819.5 389.6V397.7M820.5 388.7V392.8M821.5 384.2V393.6M822.5 385.6V392.7M823.5 389.8V394.5M824.5 390.7V393.7M825.5 389.3V392.9M826.5 388.4V394.2M827.5 390.4V395.9M828.5 390.8V393.9M829.5 388.0V394.9M830.5 388.2V395.2M831.5 387.4V393.9M832.5 388.2V394.4M833.5 385.8V394.3M834.5 389.5V397.3M835.5 388.5V393.7M836.5 389.4V394.1M837.5 388.8V395.9M838.5 387.6V393.6M839.5 387.1V393.1M840.5 386.5V392.7M841.5 389.2V397.0M842.5 389.7V397.5M843.5 389.7V394.7M844.5 389.8V393.5M845.5 389.4V394.2M846.5 389.7V397.3M847.5 389.5V396.9M848.5 389.9V398.4M849.5 388.9V393.0M850.5 390.0V393.1M851.5 386.0V394.4M852.5 389.0V393.2M853.5 385.3V393.6M854.5 389.3V393.0M855.5 386.6V393.2M856.5 389.3V397.6M857.5 388.5V392.4M858.5 390.5V394.2M859.5 390.3V396.8M860.5 389.9V393.4M861.5 389.8V397.5M862.5 389.9V393.9M863.5 390.0V393.2M864.5 389.5V398.5M865.5 389.5V395.7M866.5 389.4V393.6M867.5 390.2V393.6M868.5 389.0V393.3M869.5 386.0V393.9M870.5 389.1V393.4M871.5 388.1V394.2M872.5 386.1V393.4M873.5 389.7V394.1M874.5 388.4V393.3M875.5 389.0V395.1M876.5 385.8V394.0M877.5 389.4V393.2M878.5 390.1V393.2M879.5 387.3V393.9M880.5 386.9V393.9M881.5 389.3V394.8M882.5 387.8V394.5M883.5 388.4V393.5M884.5 390.4V395.3M885.5 390.2V395.9M886.5 390.0V393.5M887.5 389.9V396.4M888.5 388.9V393.1M889.5 389.6V393.2M890.5 386.8V394.0M891.5 389.5V393.2M892.5 389.6V393.1M893.5 387.1V393.7M894.5 386.1V394.4M895.5 391.1V394.7M896.5 389.6V395.8M897.5 388.5V396.1M898.5 389.6V396.4M899.5 387.1V394.0M900.5 389.4V394.2M901.5 389.6V395.2M902.5 387.6V393.1M903.5 385.8V392.6M904.5 389.2V393.5M905.5 389.0V393.2M906.5 388.2V396.5M907.5 385.1V393.8M908.5 388.6V392.4M909.5 388.9V393.1M910.5 388.8V396.3M911.5 389.6V397.1M912.5 389.8V393.2M913.5 385.1V393.7M914.5 391.2V394.3M915.5 389.4V395.6M916.5 391.5V398.3M917.5 389.3V397.5M918.5 386.0V393.5M919.5 389.0V394.0M920.5 388.6V395.1M921.5 390.0V393.5M922.5 389.9V397.0M923.5 389.6V396.9M924.5 388.2V394.4M925.5 389.2V395.8M926.5 388.4V393.4M927.5 386.5V392.5M928.5 386.7V392.5M929.5 387.9V395.6M930.5 389.6V393.0M931.5 388.5V393.7M932.5 387.3V394.4M933.5 388.9V393.6M934.5 389.9V398.8M935.5 389.9V396.6M936.5 389.7V393.6M937.5 388.3V394.3M938.5 388.9V395.2M939.5 387.8V394.3M940.5 389.9V394.2M941.5 387.1V394.1M942.5 390.1V397.5M943.5 386.9V392.8M944.5 386.3V392.3M945.5 388.7V392.5M946.5 388.6V391.7M947.5 388.4V392.8M948.5 384.7V392.8M949.5 387.2V392.2M950.5 389.3V392.6M951.5 389.3V393.8M952.5 389.1V393.9M953.5 389.7V396.6M954.5 389.2V393.5M955.5 388.7V396.8M956.5 389.6V393.9M957.5 389.7V394.0M958.5 385.5V393.8M959.5 386.3V393.5M960.5 387.6V393.4M961.5 388.4V394.3M962.5 390.1V394.5M963.5 387.4V394.2M964.5 390.3V395.6M965.5 390.5V397.3M966.5 388.7V395.1M967.5 391.3V395.7M968.5 390.7V398.7M969.5 390.4V394.3M970.5 391.2V396.7M971.5 386.6V394.6M972.5 390.6V397.3M973.5 389.4V394.1M974.5 388.2V395.0M975.5 386.5V394.0M976.5 389.4V393.6M977.5 389.1V394.0M978.5 388.9V397.0M979.5 389.2V394.2M980.5 388.4V393.0M981.5 385.5V393.2M982.5 388.6V394.3M983.5 389.8V393.1M984.5 389.5V392.7M985.5 388.8V398.1M986.5 388.3V393.0M987.5 387.0V392.3M988.5 386.1V392.4M989.5 389.3V393.7M990.5 390.7V394.4M991.5 390.8V399.9M992.5 389.6V395.0M993.5 390.0V394.9M994.5 391.2V396.3M995.5 391.1V395.0M996.5 391.0V394.7M997.5 390.7V397.9M998.5 388.9V396.2M999.5 390.8V398.5M1000.5 390.5V395.6M1001.5 390.8V397.9M1002.5 389.4V393.9M1003.5 387.5V393.8M1004.5 389.7V393.1M1005.5 389.0V393.3M1006.5 389.7V394.0M1007.5 390.4V394.0M1008.5 390.4V396.5M1009.5 389.4V398.2M1010.5 389.1V393.5M1011.5 389.2V397.8M1012.5 385.1V393.2M1013.5 385.1V394.2M1014.5 389.9V394.0M1015.5 390.0V395.1M1016.5 389.4V392.9M1017.5 389.2V394.0M1018.5 387.6V393.4M1019.5 388.6V392.8M1020.5 390.0V394.3M1021.5 388.4V394.1M1022.5 389.7V393.8M1023.5 389.1V392.9M1024.5 390.0V393.9M1025.5 390.2V393.3M1026.5 384.8V394.2M1027.5 389.2V395.0M1028.5 389.4V394.3M1029.5 390.1V393.8M1030.5 388.9V394.1M1031.5 385.3V393.5M1032.5 387.7V395.1M1033.5 385.3V394.3M1034.5 386.1V394.1M1035.5 388.6V392.7M1036.5 389.1V392.1M1037.5 384.6V392.0M1038.5 389.4V392.8M1039.5 389.2V393.6M1040.5 389.9V394.3M1041.5 386.3V395.0M1042.5 388.3V397.3M1043.5 387.4V395.7M1044.5 391.8V395.5M1045.5 388.6V395.6M1046.5 391.9V397.2M1047.5 391.8V400.0M1048.5 391.8V396.7M1049.5 389.9V395.8M1050.5 389.0V394.4M1051.5 390.2V395.1M1052.5 388.7V394.4M1053.5 389.2V393.4M1054.5 388.7V394.2M1055.5 389.5V393.2M1056.5 390.5V393.5M1057.5 389.8V398.6M1058.5 388.5V393.5M1059.5 389.1V394.5M1060.5 390.0V396.9M1061.5 389.3V396.9M1062.5 387.0V393.2M1063.5 386.0V392.8M1064.5 391.1V397.9M1065.5 389.6V397.0M1066.5 390.7V395.3M1067.5 387.9V395.4M1068.5 387.0V394.0M1069.5 390.7V394.8M1070.5 389.9V394.2M1071.5 390.4V394.8M1072.5 390.2V396.7M1073.5 389.7V393.6M1074.5 389.1V394.0M1075.5 386.9V394.5M1076.5 386.8V393.6M1077.5 390.3V393.5M1078.5 389.6V394.1M1079.5 387.8V399.1M1080.5 386.3V393.0M1081.5 387.3V393.3M1082.5 388.8V394.0M1083.5 389.9V398.2M1084.5 388.2V394.7M1085.5 389.0V394.0M1086.5 389.1V393.3M1087.5 389.3V393.2M1088.5 389.2V393.7M1089.5 390.1V397.0M1090.5 390.6V395.3M1091.5 390.5V398.3M1092.5 390.7V395.0M1093.5 386.4V393.4M1094.5 387.2V395.1M1095.5 387.6V392.1M1096.5 385.8V392.2M1097.5 388.2V395.7M1098.5 388.9V394.2M1099.5 389.4V396.1M1100.5 388.4V393.0M1101.5 389.4V393.4M1102.5 385.6V393.4M1103.5 390.1V394.5M1104.5 386.7V393.8M1105.5 389.6V393.5M1106.5 389.7V394.4M1107.5 390.1V394.1M1108.5 388.1V394.3M1109.5 390.9V394.3M1110.5 390.1V395.1M1111.5 390.9V393.8M1112.5 389.3V394.6M1113.5 389.7V395.5M1114.5 385.6V393.0M1115.5 387.4V392.7M1116.5 389.2V393.2M1117.5 390.0V396.1M1118.5 389.5V396.4M1119.5 389.2V393.5M1120.5 389.2V394.1M1121.5 390.5V394.6M1122.5 390.0V396.0M1123.5 389.7V393.9M1124.5 389.2V393.9M1125.5 389.7V395.7M1126.5 389.8V393.8M1127.5 389.5V398.2M1128.5 384.1V393.6M1129.5 389.8V396.0M1130.5 389.7V397.4M1131.5 386.6V393.2M1132.5 388.2V392.7M1133.5 388.7V393.5M1134.5 389.2V392.4M1135.5 389.3V392.9M1136.5 389.3V393.2M1137.5 388.9V392.9M1138.5 389.0V393.1M1139.5 390.1V397.9M1140.5 386.3V393.5M1141.5 389.8V394.7M1142.5 389.6V399.0M1143.5 389.5V393.4M1144.5 384.8V392.8M1145.5 388.5V393.4M1146.5 389.5V396.5M1147.5 390.1V393.5M1148.5 390.0V394.2M1149.5 389.1V394.5M1150.5 388.3V393.0M1151.5 388.5V392.5M1152.5 388.9V391.8M1153.5 388.8V392.3M1154.5 384.5V393.1M1155.5 388.8V393.2M1156.5 389.8V397.1M1157.5 389.3V394.5M1158.5 389.9V394.4M1159.5 388.3V392.5M1160.5 388.4V398.1M1161.5 389.7V394.3M1162.5 388.7V395.1M1163.5 384.4V393.7M1164.5 389.9V392.9M1165.5 387.9V392.9M1166.5 388.0V393.7M1167.5 386.3V392.7M1168.5 389.5V397.0M1169.5 389.3V395.1M1170.5 389.8V393.6M1171.5 390.3V393.5M1172.5 390.5V396.7M1173.5 389.4V395.2M1174.5 390.7V397.6M1175.5 387.3V395.8M1176.5 390.2V398.1M1177.5 388.7V392.8M1178.5 388.9V393.1M1179.5 388.8V396.4M1180.5 387.5V393.6M1181.5 389.7V392.9M1182.5 388.5V395.0M1183.5 389.8V397.3M1184.5 388.9V395.7M1185.5 389.2V393.0M1186.5 388.2V393.7M1187.5 390.2V395.1M1188.5 388.8V393.5M1189.5 385.8V393.7M1190.5 389.9V395.4M1191.5 389.2V397.8M1192.5 385.2V394.4M1193.5 390.2V394.1M1194.5 386.8V394.3M1195.5 390.2V393.4M1196.5 385.7V394.3M1197.5 389.9V394.5M1198.5 390.2V394.8M1199.5 390.3V393.8M1200.5 389.5V393.6M1201.5 386.8V394.0M1202.5 390.2V396.0M1203.5 390.6V394.3M1204.5 386.5V394.0M1205.5 389.9V393.7M1206.5 390.4V396.0M1207.5 387.2V394.7M1208.5 390.8V399.0M1209.5 386.2V394.7M1210.5 389.8V394.1M1211.5 390.3V394.7M1212.5 390.1V394.1M1213.5 389.3V395.0M1214.5 390.4V397.6M1215.5 390.7V394.1M1216.5 385.7V394.3M1217.5 386.3V394.4M1218.5 390.5V394.5M1219.5 390.5V395.3M1220.5 387.4V392.9M1221.5 387.1V393.5M1222.5 389.4V395.2M1223.5 389.4V393.5M1224.5 388.9V395.7M1225.5 388.7V393.2M1226.5 389.5V393.9M1227.5 389.2V393.2M1228.5 389.9V394.9M1229.5 388.2V394.8M1230.5 390.3V393.7M1231.5 389.8V393.7M1232.5 389.9V395.3M1233.5 390.1V393.6M1234.5 389.6V393.5M1235.5 389.9V393.1M1236.5 389.0V392.9M1237.5 388.7V392.9M1238.5 386.4V392.4M1239.5 389.1V396.5M1240.5 386.2V392.8M1241.5 387.5V392.8M1242.5 389.5V394.5M1243.5 389.7V394.1M1244.5 385.6V395.2M1245.5 389.6V393.8M1246.5 385.8V394.0M1247.5 389.8V392.8M1248.5 388.6V392.6M1249.5 388.9V392.9M1250.5 388.8V392.8M1251.5 389.8V394.6M1252.5 387.4V394.2M1253.5 390.2V393.8M1254.5 385.4V392.6M1255.5 387.0V392.6M1256.5 389.2V397.0M1257.5 385.3V392.6M1258.5 389.4V393.4M1259.5 388.5V396.3M1260.5 389.4V397.0M1261.5 384.7V393.5M1262.5 388.9V398.0M1263.5 388.9V394.7M1264.5 389.0V397.4M1265.5 389.3V394.5M1266.5 387.7V394.7M1267.5 386.4V393.8M1268.5 387.3V392.3M1269.5 389.1V394.1M1270.5 389.8V393.3M1271.5 388.8V394.9M1272.5 389.2V393.1M1273.5 384.6V393.7M1274.5 388.5V393.3M1275.5 386.7V393.9M1276.5 389.6V394.2M1277.5 388.7V393.5M1278.5 386.9V395.4M1279.5 389.6V395.9M1280.5 390.2V394.5M1281.5 389.5V393.6M1282.5 385.4V393.3M1283.5 388.4V393.8M1284.5 389.4V397.9M1285.5 390.0V393.3M1286.5 390.0V393.5M1287.5 389.4V393.1M1288.5 390.6V393.9M1289.5 389.0V394.3M1290.5 388.1V393.9M1291.5 388.4V392.8M1292.5 387.3V393.3M1293.5 389.5V393.1M1294.5 389.4V394.1M1295.5 388.7V394.7M1296.5 386.4V393.8M1297.5 387.5V393.9M1298.5 390.4V398.4M1299.5 391.1V394.4M1300.5 391.0V394.0M1301.5 389.6V395.4M1302.5 390.2V396.7M1303.5 390.1V394.2M1304.5 390.3V394.5M1305.5 385.0V393.9M1306.5 390.0V393.9M1307.5 389.4V393.8M1308.5 389.7V397.3M1309.5 389.9V393.9M1310.5 389.7V397.1M1311.5 389.6V392.6M1312.5 390.5V396.1M1313.5 390.2V394.6M1314.5 391.0V394.9M1315.5 389.9V394.0M1316.5 390.0V394.5M1317.5 385.1V393.8M1318.5 390.4V395.7M1319.5 390.5V393.8M1320.5 385.6V395.5M1321.5 389.9V393.7M1322.5 390.5V398.2M1323.5 389.3V393.8M1324.5 389.4V395.4M1325.5 386.3V394.4M1326.5 389.8V393.7M1327.5 386.8V393.3M1328.5 389.1V392.7M1329.5 389.4V393.1M1330.5 389.2V393.3M1331.5 386.6V393.5M1332.5 387.1V393.8M1333.5 389.6V395.3M1334.5 389.1V393.5M1335.5 389.6V395.5M1336.5 388.8V394.6M1337.5 389.6V393.1M1338.5 387.3V393.3M1339.5 389.4V395.0M1340.5 388.6V394.0M1341.5 386.2V392.9M1342.5 385.7V393.3M1343.5 389.3V393.7M1344.5 387.4V393.2M1345.5 387.8V397.1M1346.5 389.1V393.2M1347.5 388.6V394.0M1348.5 385.0V392.2M1349.5 388.4V395.3M1350.5 387.1V392.7M1351.5 388.2V393.3M1352.5 388.6V396.3M1353.5 389.0V393.4M1354.5 389.3V393.0M1355.5 389.8V397.8M1356.5 389.4V394.3M1357.5 389.7V392.9M1358.5 388.3V393.7M1359.5 386.0V394.2M1360.5 390.8V396.4M1361.5 389.8V393.0M1362.5 385.8V392.6M1363.5 388.6V392.2M1364.5 387.4V393.0M1365.5 388.4V395.4M1366.5 389.3V397.5M1367.5 387.9V393.4M1368.5 390.1V393.5M1369.5 386.0V393.9M1370.5 385.2V394.0M1371.5 388.2V393.3M1372.5 388.2V397.3M1373.5 387.7V396.1M1374.5 388.8V397.0M1375.5 384.2V392.9M1376.5 389.6V394.0M1377.5 386.9V393.4M1378.5 389.2V397.0M1379.5 388.9V396.9M1380.5 389.3V398.1M1381.5 389.0V393.0M1382.5 389.0V394.9M1383.5 388.8V393.3M1384.5 389.4V395.3M1385.5 389.7V393.6M1386.5 387.7V394.0M1387.5 389.3V393.1M1388.5 389.5V398.2M1389.5 388.8V392.9M1390.5 388.0V393.1M1391.5 389.2V392.9M1392.5 388.1V393.2M1393.5 385.8V393.4M1394.5 388.3V392.7M1395.5 385.3V393.3M1396.5 385.6V395.0M1397.5 390.4V397.2M1398.5 390.9V398.3M1399.5 390.0V395.1M1400.5 389.4V395.7M1401.5 389.9V393.1M1402.5 387.9V393.5M1403.5 387.4V394.1M1404.5 389.8V393.4M1405.5 387.2V392.9M1406.5 389.0V393.2M1407.5 389.6V393.0M1408.5 385.3V394.1M1409.5 389.4V393.1M1410.5 389.7V393.6M1411.5 389.6V395.1M1412.5 389.3V393.4M1413.5 389.0V395.6M1414.5 389.2V396.9M1415.5 388.4V394.4M1416.5 389.6V394.8M1417.5 387.3V393.8M1418.5 389.6V396.3M1419.5 389.7V394.1M1420.5 383.1V391.7M1421.5 387.0V390.9M1422.5 387.1V390.8M1423.5 386.8V390.6M1424.5 387.4V392.0M1425.5 389.2V396.8M1426.5 385.9V393.9M1427.5 390.2V393.7M1428.5 390.4V393.4M1429.5 389.6V394.7M1430.5 388.7V394.5M1431.5 386.5V394.4M1432.5 390.2V393.6M1433.5 389.1V394.2M1434.5 385.9V392.9" stroke="#FAD600" stroke-width="1"/><path d="M615.5 391.5V366.5M614.5 391.5V406.5M616.5 391.5V380.25M613.5 391.5V399.0M338.5 391.5V391.5M337.5 391.5V403.5M339.5 391.5V391.5M336.5 391.5V397.5M747.5 391.5V373.0M746.5 391.5V397.5M748.5 391.5V383.175M745.5 391.5V394.5M675.5 391.5V381.0M674.5 391.5V395.5M676.5 391.5V386.775M673.5 391.5V393.5" stroke="#FAD600" stroke-width="1"/><rect x="337.5" y="455.5" width="1098.0" height="88.0" fill="none" stroke="#ABABAB" stroke-width="1"/><path d="M331.5 455.5H337.5M331.5 499.5H337.5M331.5 542.5H337.5M331.5 464.5H337.5M331.5 534.5H337.5" stroke="#E4CA40" stroke-width="1"/><text transform="translate(329.4 459.8) scale(0.95 1)" text-anchor="end" fill="#E4CA40" style="font-family:Liberation Sans,sans-serif;font-size:11.6px">1250</text><text transform="translate(329.4 503.8) scale(0.95 1)" text-anchor="end" fill="#E4CA40" style="font-family:Liberation Sans,sans-serif;font-size:11.6px">0</text><text transform="translate(329.4 547.8) scale(0.95 1)" text-anchor="end" fill="#E4CA40" style="font-family:Liberation Sans,sans-serif;font-size:11.6px">-1250</text><text transform="translate(298 501.0) rotate(-90)" text-anchor="middle" fill="#E4CA40" style="font-family:'Liberation Sans',sans-serif;font-size:10px">[ mV ]</text><path d="M338.5 504.3V510.8M339.5 502.2V507.0M340.5 503.7V507.1M341.5 503.2V508.9M342.5 503.4V507.1M343.5 503.7V507.3M344.5 503.4V511.0M345.5 502.7V507.1M346.5 503.8V507.8M347.5 503.9V507.5M348.5 500.4V507.8M349.5 503.8V510.3M350.5 501.0V507.0M351.5 503.2V511.5M352.5 503.2V508.6M353.5 499.1V507.3M354.5 499.7V507.3M355.5 498.8V508.0M356.5 504.1V512.7M357.5 501.4V507.4M358.5 503.8V511.3M359.5 503.6V511.1M360.5 503.2V507.8M361.5 498.5V506.8M362.5 503.3V507.9M363.5 502.4V511.1M364.5 501.7V507.5M365.5 503.1V511.2M366.5 504.3V507.6M367.5 504.2V508.5M368.5 504.3V513.5M369.5 505.3V509.7M370.5 502.3V507.9M371.5 504.4V511.7M372.5 503.9V508.1M373.5 503.3V508.1M374.5 503.0V512.3M375.5 502.9V507.4M376.5 500.6V507.2M377.5 502.6V507.5M378.5 501.7V507.6M379.5 504.0V507.6M380.5 500.9V508.0M381.5 503.5V508.2M382.5 504.7V508.9M383.5 504.3V507.9M384.5 501.6V508.8M385.5 500.1V507.8M386.5 504.6V508.4M387.5 502.9V508.0M388.5 500.8V508.0M389.5 503.5V508.9M390.5 501.1V508.0M391.5 503.6V509.4M392.5 503.1V507.6M393.5 502.5V507.6M394.5 498.8V507.3M395.5 503.6V512.1M396.5 504.5V507.7M397.5 503.8V507.9M398.5 501.8V507.7M399.5 504.2V508.3M400.5 501.8V508.5M401.5 502.0V508.9M402.5 501.7V509.1M403.5 501.5V509.5M404.5 504.8V508.4M405.5 504.8V510.7M406.5 504.8V511.8M407.5 501.9V508.2M408.5 500.5V509.5M409.5 503.9V508.5M410.5 504.3V509.5M411.5 504.3V508.4M412.5 504.0V508.0M413.5 504.4V508.0M414.5 504.0V511.6M415.5 504.4V508.3M416.5 503.5V512.3M417.5 504.4V511.6M418.5 503.9V508.0M419.5 501.4V508.7M420.5 504.1V512.8M421.5 500.7V507.9M422.5 503.5V508.7M423.5 504.1V507.7M424.5 503.1V509.3M425.5 503.8V510.4M426.5 504.0V507.9M427.5 503.9V507.9M428.5 499.2V508.1M429.5 498.5V506.9M430.5 499.5V507.2M431.5 504.1V509.8M432.5 503.4V510.7M433.5 503.8V508.0M434.5 503.7V509.5M435.5 501.5V507.3M436.5 502.1V511.1M437.5 500.1V508.8M438.5 502.7V509.5M439.5 501.8V508.4M440.5 498.9V506.4M441.5 504.0V508.8M442.5 504.2V508.4M443.5 504.4V507.9M444.5 504.0V511.4M445.5 503.6V507.7M446.5 502.7V507.8M447.5 503.6V507.2M448.5 499.1V507.0M449.5 500.2V507.0M450.5 503.3V509.9M451.5 498.9V507.6M452.5 502.6V511.9M453.5 502.0V512.0M454.5 501.9V506.6M455.5 500.2V506.8M456.5 502.0V506.3M457.5 502.2V506.6M458.5 503.0V509.2M459.5 503.4V508.7M460.5 502.7V509.5M461.5 502.5V510.8M462.5 503.0V507.5M463.5 500.0V507.7M464.5 503.0V507.7M465.5 499.3V506.9M466.5 500.0V506.6M467.5 502.8V509.1M468.5 500.4V507.9M469.5 502.0V506.9M470.5 502.3V508.0M471.5 503.5V507.9M472.5 502.1V508.2M473.5 504.6V509.2M474.5 504.6V508.0M475.5 505.2V508.7M476.5 503.9V512.2M477.5 504.6V509.2M478.5 505.4V510.0M479.5 505.3V513.6M480.5 504.4V509.3M481.5 505.4V509.7M482.5 505.3V511.8M483.5 503.5V511.7M484.5 500.7V509.1M485.5 502.6V508.7M486.5 501.7V507.8M487.5 502.6V508.1M488.5 502.7V510.4M489.5 504.2V509.4M490.5 504.1V510.1M491.5 503.7V510.8M492.5 504.3V508.6M493.5 500.4V507.9M494.5 501.1V507.8M495.5 501.2V508.3M496.5 503.0V507.8M497.5 503.9V509.3M498.5 503.4V507.8M499.5 504.3V509.4M500.5 502.8V508.8M501.5 502.4V508.4M502.5 504.2V508.6M503.5 498.7V508.7M504.5 500.2V508.6M505.5 500.4V508.5M506.5 505.0V508.9M507.5 504.4V507.8M508.5 504.1V507.9M509.5 504.0V508.5M510.5 504.8V513.5M511.5 501.6V509.3M512.5 504.1V508.7M513.5 503.8V512.0M514.5 502.9V512.9M515.5 503.6V508.8M516.5 502.7V507.3M517.5 503.8V507.9M518.5 503.1V507.4M519.5 503.7V508.0M520.5 504.4V507.7M521.5 504.9V512.9M522.5 504.1V509.0M523.5 504.6V507.9M524.5 504.3V508.7M525.5 503.4V508.9M526.5 504.4V508.5M527.5 503.6V507.7M528.5 504.7V508.4M529.5 505.4V513.0M530.5 505.5V513.0M531.5 503.3V509.1M532.5 499.0V508.9M533.5 505.1V508.3M534.5 500.8V509.2M535.5 502.3V510.9M536.5 501.5V508.8M537.5 502.5V508.3M538.5 503.9V508.7M539.5 504.9V509.4M540.5 501.8V509.5M541.5 505.9V510.3M542.5 505.8V512.1M543.5 504.7V512.8M544.5 504.7V510.9M545.5 503.9V507.2M546.5 502.7V509.1M547.5 503.4V507.8M548.5 504.5V507.9M549.5 504.9V508.4M550.5 504.7V508.4M551.5 503.8V508.0M552.5 504.1V508.6M553.5 504.2V508.1M554.5 500.7V508.4M555.5 505.3V508.7M556.5 505.5V509.6M557.5 505.4V508.6M558.5 504.2V507.9M559.5 504.5V508.0M560.5 503.9V507.4M561.5 504.5V508.5M562.5 505.1V513.0M563.5 501.8V508.1M564.5 501.1V510.3M565.5 504.4V508.2M566.5 500.2V507.6M567.5 503.3V508.4M568.5 501.6V507.5M569.5 503.2V508.2M570.5 503.5V507.3M571.5 503.5V508.0M572.5 503.9V507.2M573.5 503.4V508.2M574.5 503.8V507.9M575.5 500.1V507.1M576.5 503.9V510.1M577.5 503.1V507.5M578.5 503.1V507.1M579.5 503.1V508.1M580.5 503.2V508.6M581.5 502.9V509.8M582.5 502.9V506.5M583.5 502.7V507.0M584.5 502.8V506.5M585.5 501.9V506.8M586.5 500.5V507.8M587.5 505.0V512.7M588.5 504.8V508.7M589.5 505.0V510.9M590.5 504.2V511.4M591.5 504.8V508.4M592.5 505.3V509.5M593.5 501.7V508.5M594.5 499.2V507.7M595.5 503.8V507.7M596.5 504.3V508.6M597.5 499.4V508.5M598.5 500.8V507.5M599.5 502.6V507.4M600.5 504.3V509.2M601.5 504.2V508.1M602.5 504.3V508.3M603.5 501.5V507.4M604.5 504.0V510.2M605.5 504.2V508.6M606.5 504.8V511.5M607.5 504.0V508.9M608.5 505.2V511.4M609.5 501.5V509.3M610.5 505.3V509.1M611.5 504.0V509.5M612.5 504.8V512.8M613.5 503.4V512.9M614.5 504.9V512.7M615.5 504.3V508.6M616.5 504.9V511.5M617.5 504.5V509.0M618.5 505.2V509.0M619.5 504.9V508.7M620.5 501.7V507.6M621.5 503.4V507.3M622.5 503.9V507.2M623.5 499.2V507.8M624.5 503.1V506.8M625.5 504.2V508.0M626.5 504.3V508.2M627.5 504.5V509.8M628.5 504.6V508.1M629.5 498.8V507.9M630.5 504.0V507.7M631.5 503.0V510.8M632.5 503.7V507.3M633.5 504.8V512.2M634.5 504.4V508.2M635.5 503.4V507.7M636.5 503.7V509.9M637.5 504.5V512.3M638.5 504.4V508.9M639.5 505.2V508.9M640.5 500.6V508.4M641.5 504.7V508.2M642.5 501.8V509.1M643.5 505.2V513.5M644.5 502.9V509.9M645.5 499.0V508.0M646.5 504.0V513.9M647.5 504.7V508.8M648.5 505.1V508.2M649.5 504.5V510.1M650.5 504.2V508.9M651.5 505.5V509.8M652.5 503.9V508.8M653.5 505.1V508.3M654.5 505.1V512.3M655.5 501.3V508.7M656.5 504.2V510.3M657.5 503.8V507.4M658.5 501.5V507.3M659.5 503.1V506.9M660.5 502.6V506.9M661.5 502.8V506.7M662.5 503.4V511.0M663.5 503.1V507.1M664.5 500.8V508.7M665.5 504.9V508.8M666.5 504.9V509.8M667.5 503.3V509.5M668.5 501.8V507.3M669.5 503.7V508.5M670.5 503.5V508.3M671.5 504.5V509.0M672.5 502.0V508.0M673.5 503.3V508.7M674.5 504.5V508.0M675.5 504.5V512.1M676.5 501.2V508.4M677.5 504.8V511.2M678.5 500.4V507.7M679.5 503.9V512.6M680.5 503.7V507.4M681.5 504.3V507.7M682.5 500.9V507.9M683.5 504.1V508.5M684.5 503.8V507.5M685.5 503.7V507.4M686.5 504.2V507.8M687.5 502.9V508.3M688.5 504.8V509.2M689.5 503.1V508.3M690.5 504.6V509.1M691.5 501.0V510.3M692.5 504.1V508.0M693.5 504.6V507.8M694.5 503.1V507.4M695.5 500.6V507.1M696.5 503.3V510.8M697.5 500.2V508.1M698.5 504.1V508.2M699.5 505.6V508.6M700.5 501.2V509.3M701.5 505.8V510.0M702.5 503.9V509.9M703.5 504.9V508.6M704.5 503.1V508.2M705.5 503.2V507.7M706.5 503.4V507.9M707.5 503.7V512.6M708.5 502.6V508.6M709.5 503.2V507.7M710.5 502.1V508.1M711.5 504.2V509.0M712.5 499.3V507.8M713.5 504.2V511.8M714.5 503.9V509.4M715.5 504.8V511.9M716.5 503.6V508.1M717.5 501.8V509.2M718.5 503.1V508.8M719.5 504.5V509.0M720.5 505.4V509.8M721.5 503.0V508.4M722.5 503.2V508.6M723.5 500.0V507.7M724.5 503.9V507.7M725.5 503.9V508.4M726.5 503.3V507.7M727.5 502.9V508.9M728.5 504.1V508.5M729.5 504.2V507.8M730.5 501.8V507.9M731.5 504.0V507.8M732.5 504.0V508.3M733.5 503.6V509.5M734.5 504.9V509.5M735.5 502.9V508.6M736.5 505.2V509.1M737.5 502.4V509.5M738.5 504.2V508.4M739.5 503.6V509.7M740.5 503.9V512.8M741.5 503.3V507.8M742.5 502.6V508.5M743.5 502.9V508.9M744.5 503.5V508.0M745.5 503.5V512.6M746.5 504.5V513.5M747.5 505.3V508.6M748.5 503.2V509.0M749.5 505.4V508.2M750.5 499.7V507.6M751.5 503.5V507.7M752.5 503.1V507.3M753.5 501.1V507.2M754.5 503.4V510.0M755.5 504.2V508.2M756.5 503.0V507.4M757.5 504.6V509.2M758.5 504.5V510.3M759.5 499.9V509.3M760.5 504.7V508.9M761.5 502.8V508.0M762.5 505.4V513.5M763.5 501.9V509.9M764.5 504.4V511.1M765.5 504.8V510.0M766.5 504.1V511.1M767.5 503.4V511.8M768.5 500.0V507.9M769.5 504.5V508.1M770.5 504.2V508.6M771.5 504.0V511.6M772.5 504.0V507.7M773.5 504.1V508.2M774.5 504.4V507.7M775.5 502.9V508.1M776.5 503.9V508.3M777.5 503.6V507.4M778.5 503.3V507.3M779.5 503.1V509.9M780.5 503.1V508.1M781.5 502.9V511.4M782.5 504.2V507.4M783.5 503.4V507.5M784.5 504.3V508.9M785.5 505.0V508.8M786.5 502.1V509.1M787.5 505.3V508.2M788.5 505.1V508.1M789.5 505.2V509.4M790.5 504.7V510.4M791.5 505.2V512.4M792.5 504.2V508.8M793.5 505.6V508.6M794.5 505.4V509.3M795.5 505.5V509.4M796.5 502.7V508.3M797.5 502.4V506.5M798.5 502.9V507.4M799.5 503.8V507.5M800.5 503.6V509.8M801.5 503.1V508.6M802.5 504.8V509.6M803.5 502.6V509.5M804.5 505.3V508.8M805.5 504.8V509.3M806.5 503.8V510.1M807.5 504.5V507.8M808.5 502.7V507.6M809.5 504.2V508.0M810.5 504.4V510.8M811.5 503.9V507.2M812.5 501.2V509.1M813.5 504.0V508.9M814.5 504.1V509.2M815.5 498.8V507.2M816.5 502.6V511.0M817.5 500.0V507.2M818.5 502.6V508.3M819.5 503.2V508.3M820.5 502.4V507.8M821.5 504.5V508.5M822.5 504.8V509.2M823.5 500.6V509.3M824.5 499.4V507.8M825.5 503.5V508.7M826.5 503.6V507.3M827.5 503.6V511.7M828.5 503.9V509.8M829.5 504.9V510.2M830.5 505.6V509.5M831.5 505.0V509.2M832.5 503.4V510.4M833.5 505.0V510.8M834.5 501.0V508.4M835.5 504.7V511.2M836.5 502.0V508.9M837.5 502.1V507.3M838.5 500.6V508.3M839.5 504.7V509.7M840.5 502.9V508.5M841.5 505.0V509.4M842.5 504.0V508.4M843.5 502.9V508.7M844.5 502.1V509.0M845.5 500.2V510.5M846.5 502.5V509.4M847.5 504.9V508.4M848.5 504.1V512.6M849.5 501.6V509.1M850.5 503.3V509.2M851.5 500.4V509.5M852.5 502.7V506.5M853.5 498.5V505.9M854.5 501.6V506.6M855.5 502.2V509.2M856.5 503.6V511.1M857.5 499.0V507.8M858.5 504.7V509.6M859.5 503.7V510.6M860.5 505.2V509.0M861.5 505.0V508.5M862.5 504.3V508.2M863.5 504.9V509.2M864.5 505.1V509.2M865.5 505.0V511.8M866.5 505.2V508.4M867.5 504.6V511.5M868.5 504.9V508.9M869.5 504.1V509.1M870.5 505.0V508.2M871.5 504.2V508.0M872.5 504.2V507.6M873.5 501.4V508.0M874.5 503.4V507.8M875.5 504.3V508.7M876.5 504.5V508.5M877.5 504.1V507.6M878.5 505.0V508.4M879.5 505.3V513.5M880.5 502.5V509.4M881.5 504.6V512.0M882.5 503.8V507.9M883.5 501.0V508.2M884.5 504.3V509.5M885.5 500.7V508.4M886.5 500.7V508.8M887.5 505.3V510.7M888.5 503.8V511.6M889.5 503.9V509.2M890.5 500.1V508.0M891.5 503.4V508.0M892.5 504.0V507.9M893.5 504.4V511.2M894.5 501.8V508.7M895.5 502.7V507.3M896.5 502.0V508.1M897.5 503.6V508.6M898.5 503.7V508.8M899.5 503.0V508.4M900.5 500.3V508.0M901.5 502.9V506.9M902.5 503.5V507.0M903.5 502.9V507.6M904.5 504.3V507.7M905.5 503.5V509.0M906.5 503.9V508.5M907.5 504.1V507.1M908.5 503.9V510.5M909.5 500.7V508.4M910.5 503.7V509.8M911.5 501.0V507.8M912.5 503.1V508.6M913.5 504.8V511.7M914.5 503.5V508.0M915.5 504.8V509.7M916.5 504.4V509.5M917.5 501.3V509.3M918.5 504.2V509.0M919.5 504.0V508.0M920.5 503.9V507.9M921.5 504.4V507.7M922.5 502.6V507.7M923.5 502.2V508.8M924.5 504.8V508.7M925.5 504.5V510.2M926.5 504.8V508.5M927.5 503.1V511.9M928.5 504.7V508.5M929.5 502.0V508.7M930.5 500.7V508.2M931.5 504.5V510.4M932.5 504.2V507.9M933.5 502.6V507.8M934.5 502.8V507.0M935.5 502.1V509.8M936.5 499.7V506.7M937.5 503.4V507.4M938.5 503.3V507.5M939.5 503.4V507.6M940.5 503.4V507.1M941.5 503.9V508.3M942.5 505.2V510.4M943.5 504.7V508.7M944.5 503.8V508.9M945.5 500.8V507.8M946.5 505.2V509.1M947.5 505.7V509.7M948.5 503.7V512.5M949.5 506.1V509.9M950.5 505.8V510.4M951.5 504.7V509.4M952.5 504.8V509.4M953.5 504.9V510.5M954.5 506.4V509.9M955.5 505.8V509.8M956.5 506.2V509.8M957.5 505.0V509.3M958.5 504.5V508.3M959.5 504.9V509.5M960.5 502.5V508.6M961.5 503.9V508.1M962.5 504.5V508.4M963.5 502.8V508.3M964.5 504.5V508.2M965.5 504.4V509.5M966.5 502.3V509.6M967.5 502.0V506.6M968.5 502.9V507.1M969.5 504.0V506.9M970.5 500.9V507.2M971.5 502.9V507.5M972.5 503.8V507.5M973.5 502.6V508.6M974.5 504.1V512.2M975.5 504.3V509.2M976.5 500.9V510.2M977.5 504.2V510.2M978.5 499.4V508.2M979.5 504.5V509.0M980.5 504.3V507.8M981.5 503.7V508.9M982.5 502.8V507.2M983.5 503.7V511.9M984.5 502.9V512.5M985.5 502.8V508.5M986.5 502.8V507.4M987.5 499.3V508.4M988.5 503.4V507.8M989.5 503.3V506.5M990.5 505.1V508.5M991.5 501.5V508.9M992.5 503.6V508.4M993.5 502.0V509.0M994.5 504.9V513.1M995.5 503.8V513.7M996.5 505.0V509.3M997.5 502.4V509.0M998.5 503.6V508.3M999.5 502.5V508.1M1000.5 502.5V509.5M1001.5 502.9V508.1M1002.5 501.9V508.0M1003.5 503.6V509.5M1004.5 503.7V512.5M1005.5 503.5V508.7M1006.5 504.0V510.8M1007.5 503.5V509.6M1008.5 503.2V508.1M1009.5 499.0V508.4M1010.5 503.5V511.5M1011.5 503.4V507.7M1012.5 503.5V507.7M1013.5 503.9V508.2M1014.5 503.1V508.5M1015.5 502.9V508.5M1016.5 504.9V508.4M1017.5 505.2V513.1M1018.5 503.3V509.2M1019.5 504.9V509.9M1020.5 504.2V508.2M1021.5 504.0V510.6M1022.5 503.9V508.8M1023.5 503.8V512.9M1024.5 504.8V508.8M1025.5 504.8V508.6M1026.5 505.0V509.3M1027.5 503.6V508.2M1028.5 502.7V507.5M1029.5 502.5V506.1M1030.5 501.2V507.4M1031.5 501.8V505.8M1032.5 499.8V506.3M1033.5 502.3V507.4M1034.5 504.5V507.6M1035.5 503.2V508.0M1036.5 504.8V509.0M1037.5 503.9V510.3M1038.5 504.3V508.4M1039.5 503.9V508.4M1040.5 503.0V507.6M1041.5 504.3V512.3M1042.5 504.2V511.2M1043.5 504.1V509.1M1044.5 504.5V508.0M1045.5 503.8V509.4M1046.5 504.0V507.1M1047.5 502.6V511.3M1048.5 502.7V507.0M1049.5 500.5V508.6M1050.5 505.2V512.4M1051.5 504.2V508.7M1052.5 503.0V508.7M1053.5 504.1V507.7M1054.5 504.4V511.5M1055.5 501.8V508.0M1056.5 504.3V509.8M1057.5 504.3V508.0M1058.5 505.0V508.3M1059.5 505.0V508.5M1060.5 502.2V508.6M1061.5 500.9V507.9M1062.5 503.4V509.7M1063.5 503.6V508.6M1064.5 504.7V508.5M1065.5 505.4V513.2M1066.5 505.9V511.5M1067.5 504.8V508.1M1068.5 504.2V509.3M1069.5 504.5V508.6M1070.5 503.7V512.2M1071.5 504.1V506.9M1072.5 503.4V507.3M1073.5 500.9V507.1M1074.5 502.7V509.0M1075.5 499.6V507.3M1076.5 504.1V507.9M1077.5 501.7V508.0M1078.5 503.6V508.1M1079.5 504.4V511.8M1080.5 503.7V507.5M1081.5 498.3V506.7M1082.5 498.9V506.6M1083.5 504.3V509.2M1084.5 505.4V511.9M1085.5 505.0V512.5M1086.5 506.1V509.2M1087.5 505.1V510.0M1088.5 503.3V509.1M1089.5 503.1V510.2M1090.5 506.4V512.2M1091.5 506.5V510.0M1092.5 504.9V513.9M1093.5 505.0V508.2M1094.5 504.8V513.5M1095.5 504.6V510.1M1096.5 504.1V512.3M1097.5 504.7V510.1M1098.5 504.8V508.5M1099.5 505.1V508.3M1100.5 502.5V507.7M1101.5 504.8V512.9M1102.5 503.9V508.7M1103.5 503.5V508.1M1104.5 502.8V508.7M1105.5 503.6V507.1M1106.5 504.3V511.4M1107.5 504.6V509.8M1108.5 500.5V508.6M1109.5 502.7V508.0M1110.5 504.1V509.1M1111.5 499.3V508.6M1112.5 502.9V507.8M1113.5 504.0V507.3M1114.5 504.2V507.2M1115.5 503.7V511.3M1116.5 503.9V510.9M1117.5 503.9V510.5M1118.5 503.4V507.5M1119.5 504.4V509.1M1120.5 502.0V508.5M1121.5 503.1V506.8M1122.5 503.3V510.3M1123.5 503.2V506.8M1124.5 499.2V506.8M1125.5 499.5V506.9M1126.5 503.5V511.6M1127.5 504.6V508.5M1128.5 504.7V509.0M1129.5 505.1V508.3M1130.5 504.4V509.8M1131.5 504.1V507.9M1132.5 503.4V510.6M1133.5 499.6V508.6M1134.5 504.8V509.1M1135.5 504.7V513.5M1136.5 505.2V508.9M1137.5 501.3V508.0M1138.5 503.3V507.1M1139.5 504.0V507.3M1140.5 502.0V507.1M1141.5 500.4V507.5M1142.5 502.9V507.2M1143.5 502.0V506.8M1144.5 502.5V506.8M1145.5 504.6V508.1M1146.5 504.9V508.3M1147.5 503.7V512.0M1148.5 503.5V507.4M1149.5 502.7V507.4M1150.5 502.9V507.7M1151.5 500.3V506.9M1152.5 500.7V507.4M1153.5 504.1V510.5M1154.5 504.5V509.2M1155.5 503.6V507.9M1156.5 503.0V507.3M1157.5 501.6V508.8M1158.5 502.3V507.0M1159.5 504.4V512.0M1160.5 501.8V508.6M1161.5 504.8V508.7M1162.5 503.6V508.7M1163.5 504.0V510.4M1164.5 505.0V510.9M1165.5 505.0V509.2M1166.5 502.0V508.8M1167.5 504.4V509.1M1168.5 503.4V511.8M1169.5 504.2V507.5M1170.5 501.6V508.5M1171.5 503.3V508.8M1172.5 504.6V507.5M1173.5 503.7V511.0M1174.5 502.3V508.2M1175.5 503.7V509.6M1176.5 504.1V508.2M1177.5 505.0V508.7M1178.5 505.3V508.9M1179.5 503.8V509.0M1180.5 504.8V510.8M1181.5 500.3V509.4M1182.5 505.1V508.5M1183.5 503.4V509.6M1184.5 503.5V508.9M1185.5 504.1V509.4M1186.5 504.8V513.8M1187.5 504.8V510.6M1188.5 502.2V508.9M1189.5 504.1V508.1M1190.5 503.5V508.7M1191.5 504.1V507.2M1192.5 502.3V511.4M1193.5 502.5V508.7M1194.5 504.0V507.3M1195.5 502.7V507.4M1196.5 503.9V507.9M1197.5 504.5V507.9M1198.5 501.7V507.9M1199.5 504.5V510.7M1200.5 500.0V508.7M1201.5 504.0V507.9M1202.5 504.2V508.6M1203.5 502.9V510.2M1204.5 504.3V507.8M1205.5 504.1V507.7M1206.5 501.7V507.5M1207.5 503.0V507.7M1208.5 503.2V507.7M1209.5 503.6V510.1M1210.5 499.2V506.9M1211.5 502.6V507.8M1212.5 500.1V507.0M1213.5 500.4V507.4M1214.5 503.7V510.6M1215.5 502.6V508.7M1216.5 503.1V508.3M1217.5 503.5V508.8M1218.5 504.0V507.7M1219.5 501.9V508.6M1220.5 501.1V509.6M1221.5 504.1V508.4M1222.5 504.0V509.0M1223.5 504.8V508.3M1224.5 503.2V508.4M1225.5 504.1V508.4M1226.5 501.0V508.4M1227.5 503.4V507.5M1228.5 500.9V508.2M1229.5 503.8V507.5M1230.5 502.9V508.0M1231.5 504.3V507.8M1232.5 503.0V507.7M1233.5 499.9V508.8M1234.5 503.1V510.7M1235.5 503.9V508.1M1236.5 504.3V508.4M1237.5 504.0V508.3M1238.5 503.4V507.6M1239.5 503.3V507.9M1240.5 501.3V509.3M1241.5 500.4V508.6M1242.5 503.9V510.2M1243.5 503.1V508.8M1244.5 499.9V508.0M1245.5 503.1V508.2M1246.5 505.1V508.3M1247.5 503.9V508.5M1248.5 502.4V508.1M1249.5 503.6V511.4M1250.5 503.8V507.2M1251.5 501.6V507.1M1252.5 503.4V511.4M1253.5 504.5V508.4M1254.5 503.2V512.8M1255.5 505.2V509.6M1256.5 504.6V509.1M1257.5 503.8V508.4M1258.5 504.0V510.8M1259.5 503.4V507.5M1260.5 502.8V506.5M1261.5 502.2V508.8M1262.5 503.6V508.0M1263.5 502.3V508.2M1264.5 505.3V508.3M1265.5 505.7V509.8M1266.5 505.1V509.0M1267.5 504.1V509.6M1268.5 505.0V510.1M1269.5 504.1V507.5M1270.5 504.1V510.4M1271.5 504.1V511.5M1272.5 498.1V508.7M1273.5 504.0V507.1M1274.5 503.0V509.3M1275.5 503.5V508.1M1276.5 501.2V508.1M1277.5 503.4V508.5M1278.5 505.9V509.3M1279.5 506.1V510.3M1280.5 505.4V512.6M1281.5 504.5V511.7M1282.5 503.7V508.2M1283.5 499.6V508.3M1284.5 504.1V507.9M1285.5 503.9V507.2M1286.5 503.8V507.1M1287.5 503.4V508.6M1288.5 503.9V507.5M1289.5 504.1V507.9M1290.5 503.9V508.5M1291.5 504.9V511.3M1292.5 504.5V508.7M1293.5 503.5V508.8M1294.5 504.9V508.3M1295.5 503.5V508.4M1296.5 504.9V510.4M1297.5 505.3V508.3M1298.5 502.1V508.8M1299.5 503.9V508.1M1300.5 502.5V507.5M1301.5 504.3V512.1M1302.5 504.5V508.4M1303.5 504.4V511.8M1304.5 504.1V509.9M1305.5 505.0V508.9M1306.5 503.8V509.4M1307.5 505.3V512.3M1308.5 504.1V510.1M1309.5 504.7V508.1M1310.5 503.7V507.9M1311.5 501.4V507.9M1312.5 502.3V508.3M1313.5 505.0V509.4M1314.5 504.3V508.4M1315.5 503.7V507.7M1316.5 502.1V507.5M1317.5 503.8V507.5M1318.5 503.6V508.7M1319.5 503.7V511.7M1320.5 503.8V510.4M1321.5 503.2V507.8M1322.5 503.6V507.9M1323.5 504.7V511.8M1324.5 500.8V508.7M1325.5 499.0V508.7M1326.5 504.9V508.4M1327.5 504.6V508.9M1328.5 504.2V510.2M1329.5 504.9V508.5M1330.5 504.3V509.5M1331.5 499.2V508.0M1332.5 504.1V507.1M1333.5 504.0V512.8M1334.5 505.0V508.7M1335.5 504.8V508.7M1336.5 504.2V508.4M1337.5 504.8V508.9M1338.5 504.7V508.0M1339.5 504.5V510.8M1340.5 503.9V512.3M1341.5 502.6V510.2M1342.5 504.0V511.0M1343.5 505.0V509.4M1344.5 504.0V507.9M1345.5 499.1V507.0M1346.5 502.4V507.2M1347.5 503.5V509.6M1348.5 501.2V506.6M1349.5 503.4V506.8M1350.5 501.7V507.1M1351.5 502.9V507.6M1352.5 503.7V509.1M1353.5 501.4V508.3M1354.5 504.3V508.8M1355.5 504.1V507.2M1356.5 503.3V510.9M1357.5 503.4V508.6M1358.5 502.2V507.7M1359.5 501.8V511.6M1360.5 503.1V507.8M1361.5 500.8V507.3M1362.5 498.3V507.0M1363.5 499.1V507.2M1364.5 501.0V507.7M1365.5 501.9V509.9M1366.5 502.4V506.4M1367.5 502.1V510.4M1368.5 503.2V511.0M1369.5 503.5V507.4M1370.5 502.8V506.9M1371.5 499.2V507.3M1372.5 503.6V507.8M1373.5 505.8V513.2M1374.5 504.7V509.7M1375.5 506.5V510.6M1376.5 506.5V511.8M1377.5 507.0V511.4M1378.5 507.2V510.2M1379.5 503.8V508.4M1380.5 503.4V509.0M1381.5 503.4V507.0M1382.5 503.3V510.3M1383.5 500.4V506.7M1384.5 502.9V506.1M1385.5 502.5V506.4M1386.5 502.7V506.6M1387.5 501.7V506.8M1388.5 501.3V507.5M1389.5 503.2V511.3M1390.5 502.9V509.5M1391.5 502.2V510.1M1392.5 502.3V510.0M1393.5 499.4V506.8M1394.5 502.7V506.2M1395.5 500.6V506.3M1396.5 502.2V507.1M1397.5 500.0V506.8M1398.5 503.6V507.2M1399.5 503.7V509.8M1400.5 504.4V508.1M1401.5 501.0V507.4M1402.5 503.2V511.0M1403.5 503.8V507.9M1404.5 504.4V508.4M1405.5 503.9V511.3M1406.5 499.5V507.6M1407.5 503.6V508.8M1408.5 504.2V507.2M1409.5 503.2V507.8M1410.5 503.5V513.6M1411.5 504.2V508.7M1412.5 504.1V507.1M1413.5 502.9V509.2M1414.5 502.8V506.9M1415.5 503.7V512.5M1416.5 500.0V507.7M1417.5 503.5V509.3M1418.5 503.6V508.5M1419.5 504.5V508.8M1420.5 504.2V508.2M1421.5 504.0V508.0M1422.5 500.5V509.2M1423.5 501.0V507.3M1424.5 502.7V508.1M1425.5 504.0V507.2M1426.5 503.5V511.5M1427.5 502.0V507.7M1428.5 500.0V507.3M1429.5 504.4V510.4M1430.5 504.7V508.1M1431.5 504.8V509.0M1432.5 503.9V512.6M1433.5 504.5V509.0M1434.5 502.1V507.8" stroke="#FAD600" stroke-width="1"/><path d="M616.5 506V486M615.5 506V522M617.5 506V497.0M614.5 506V514.0M749.5 506V490M748.5 506V512M750.5 506V498.8M747.5 506V509.0M676.5 506V495M675.5 506V510M677.5 506V501.05M674.5 506V508.0" stroke="#FAD600" stroke-width="1"/><text transform="translate(337.5 560.1) scale(0.95 1)" text-anchor="middle" fill="#E4CA40" style="font-family:Liberation Sans,sans-serif;font-size:11px">0</text><text transform="translate(381.5 560.1) scale(0.95 1)" text-anchor="middle" fill="#E4CA40" style="font-family:Liberation Sans,sans-serif;font-size:11px">10</text><text transform="translate(425.5 560.1) scale(0.95 1)" text-anchor="middle" fill="#E4CA40" style="font-family:Liberation Sans,sans-serif;font-size:11px">20</text><text transform="translate(469.5 560.1) scale(0.95 1)" text-anchor="middle" fill="#E4CA40" style="font-family:Liberation Sans,sans-serif;font-size:11px">30</text><text transform="translate(513.5 560.1) scale(0.95 1)" text-anchor="middle" fill="#E4CA40" style="font-family:Liberation Sans,sans-serif;font-size:11px">40</text><text transform="translate(557.5 560.1) scale(0.95 1)" text-anchor="middle" fill="#E4CA40" style="font-family:Liberation Sans,sans-serif;font-size:11px">50</text><text transform="translate(600.5 560.1) scale(0.95 1)" text-anchor="middle" fill="#E4CA40" style="font-family:Liberation Sans,sans-serif;font-size:11px">60</text><text transform="translate(644.5 560.1) scale(0.95 1)" text-anchor="middle" fill="#E4CA40" style="font-family:Liberation Sans,sans-serif;font-size:11px">70</text><text transform="translate(688.5 560.1) scale(0.95 1)" text-anchor="middle" fill="#E4CA40" style="font-family:Liberation Sans,sans-serif;font-size:11px">80</text><text transform="translate(732.5 560.1) scale(0.95 1)" text-anchor="middle" fill="#E4CA40" style="font-family:Liberation Sans,sans-serif;font-size:11px">90</text><text transform="translate(776.5 560.1) scale(0.95 1)" text-anchor="middle" fill="#E4CA40" style="font-family:Liberation Sans,sans-serif;font-size:11px">100</text><text transform="translate(820.5 560.1) scale(0.95 1)" text-anchor="middle" fill="#E4CA40" style="font-family:Liberation Sans,sans-serif;font-size:11px">110</text><text transform="translate(864.5 560.1) scale(0.95 1)" text-anchor="middle" fill="#E4CA40" style="font-family:Liberation Sans,sans-serif;font-size:11px">120</text><text transform="translate(908.5 560.1) scale(0.95 1)" text-anchor="middle" fill="#E4CA40" style="font-family:Liberation Sans,sans-serif;font-size:11px">130</text><text transform="translate(952.5 560.1) scale(0.95 1)" text-anchor="middle" fill="#E4CA40" style="font-family:Liberation Sans,sans-serif;font-size:11px">140</text><text transform="translate(996.5 560.1) scale(0.95 1)" text-anchor="middle" fill="#E4CA40" style="font-family:Liberation Sans,sans-serif;font-size:11px">150</text><text transform="translate(1039.5 560.1) scale(0.95 1)" text-anchor="middle" fill="#E4CA40" style="font-family:Liberation Sans,sans-serif;font-size:11px">160</text><text transform="translate(1083.5 560.1) scale(0.95 1)" text-anchor="middle" fill="#E4CA40" style="font-family:Liberation Sans,sans-serif;font-size:11px">170</text><text transform="translate(1127.5 560.1) scale(0.95 1)" text-anchor="middle" fill="#E4CA40" style="font-family:Liberation Sans,sans-serif;font-size:11px">180</text><text transform="translate(1171.5 560.1) scale(0.95 1)" text-anchor="middle" fill="#E4CA40" style="font-family:Liberation Sans,sans-serif;font-size:11px">190</text><text transform="translate(1215.5 560.1) scale(0.95 1)" text-anchor="middle" fill="#E4CA40" style="font-family:Liberation Sans,sans-serif;font-size:11px">200</text><text transform="translate(1259.5 560.1) scale(0.95 1)" text-anchor="middle" fill="#E4CA40" style="font-family:Liberation Sans,sans-serif;font-size:11px">210</text><text transform="translate(1303.5 560.1) scale(0.95 1)" text-anchor="middle" fill="#E4CA40" style="font-family:Liberation Sans,sans-serif;font-size:11px">220</text><text transform="translate(1347.5 560.1) scale(0.95 1)" text-anchor="middle" fill="#E4CA40" style="font-family:Liberation Sans,sans-serif;font-size:11px">230</text><text transform="translate(1391.5 560.1) scale(0.95 1)" text-anchor="middle" fill="#E4CA40" style="font-family:Liberation Sans,sans-serif;font-size:11px">240</text><text transform="translate(1435.5 560.1) scale(0.95 1)" text-anchor="middle" fill="#E4CA40" style="font-family:Liberation Sans,sans-serif;font-size:11px">250</text><path d="M337.5 543V549M381.5 543V549M425.5 543V549M469.5 543V549M513.5 543V549M557.5 543V549M600.5 543V549M644.5 543V549M688.5 543V549M732.5 543V549M776.5 543V549M820.5 543V549M864.5 543V549M908.5 543V549M952.5 543V549M996.5 543V549M1039.5 543V549M1083.5 543V549M1127.5 543V549M1171.5 543V549M1215.5 543V549M1259.5 543V549M1303.5 543V549M1347.5 543V549M1391.5 543V549M1435.5 543V549" stroke="#E4CA40" stroke-width="1"/><text transform="translate(885.0 574.0) scale(0.95 1)" text-anchor="middle" fill="#E4CA40" style="font-family:Liberation Sans,sans-serif;font-size:11px">[ ms ]</text><rect x="284" y="579" width="1162" height="18" fill="#B5D1F5"/><text x="865" y="591.8" text-anchor="middle" fill="#111a33" style="font-family:'Liberation Sans',sans-serif;font-size:11px;font-weight:700">Stimulus</text><path d="M332.5 652.5V606.5H1435.5" fill="none" stroke="#ABABAB"/><path d="M1435.5 606.5V652.5H332.5" fill="none" stroke="#E8E8E8"/><path d="M326 629.5H1435.5M326 606.5H332.5M326 652.5H332.5" stroke="#E4CA40"/><text transform="translate(323.2 610.8) scale(0.95 1)" text-anchor="end" fill="#E4CA40" style="font-family:Liberation Sans,sans-serif;font-size:11.6px">100</text><text transform="translate(323.2 633.8) scale(0.95 1)" text-anchor="end" fill="#E4CA40" style="font-family:Liberation Sans,sans-serif;font-size:11.6px">0</text><text transform="translate(323.2 656.8) scale(0.95 1)" text-anchor="end" fill="#E4CA40" style="font-family:Liberation Sans,sans-serif;font-size:11.6px">-100</text><text transform="translate(297.5 630.0) rotate(-90)" text-anchor="middle" fill="#E4CA40" style="font-family:'Liberation Sans',sans-serif;font-size:10px">[ µA ]</text><text transform="translate(332.5 669.6) scale(0.95 1)" text-anchor="middle" fill="#E4CA40" style="font-family:Liberation Sans,sans-serif;font-size:11px">0</text><text transform="translate(376.5 669.6) scale(0.95 1)" text-anchor="middle" fill="#E4CA40" style="font-family:Liberation Sans,sans-serif;font-size:11px">10</text><text transform="translate(420.5 669.6) scale(0.95 1)" text-anchor="middle" fill="#E4CA40" style="font-family:Liberation Sans,sans-serif;font-size:11px">20</text><text transform="translate(464.5 669.6) scale(0.95 1)" text-anchor="middle" fill="#E4CA40" style="font-family:Liberation Sans,sans-serif;font-size:11px">30</text><text transform="translate(508.5 669.6) scale(0.95 1)" text-anchor="middle" fill="#E4CA40" style="font-family:Liberation Sans,sans-serif;font-size:11px">40</text><text transform="translate(553.5 669.6) scale(0.95 1)" text-anchor="middle" fill="#E4CA40" style="font-family:Liberation Sans,sans-serif;font-size:11px">50</text><text transform="translate(597.5 669.6) scale(0.95 1)" text-anchor="middle" fill="#E4CA40" style="font-family:Liberation Sans,sans-serif;font-size:11px">60</text><text transform="translate(641.5 669.6) scale(0.95 1)" text-anchor="middle" fill="#E4CA40" style="font-family:Liberation Sans,sans-serif;font-size:11px">70</text><text transform="translate(685.5 669.6) scale(0.95 1)" text-anchor="middle" fill="#E4CA40" style="font-family:Liberation Sans,sans-serif;font-size:11px">80</text><text transform="translate(729.5 669.6) scale(0.95 1)" text-anchor="middle" fill="#E4CA40" style="font-family:Liberation Sans,sans-serif;font-size:11px">90</text><text transform="translate(773.5 669.6) scale(0.95 1)" text-anchor="middle" fill="#E4CA40" style="font-family:Liberation Sans,sans-serif;font-size:11px">100</text><text transform="translate(817.5 669.6) scale(0.95 1)" text-anchor="middle" fill="#E4CA40" style="font-family:Liberation Sans,sans-serif;font-size:11px">110</text><text transform="translate(861.5 669.6) scale(0.95 1)" text-anchor="middle" fill="#E4CA40" style="font-family:Liberation Sans,sans-serif;font-size:11px">120</text><text transform="translate(905.5 669.6) scale(0.95 1)" text-anchor="middle" fill="#E4CA40" style="font-family:Liberation Sans,sans-serif;font-size:11px">130</text><text transform="translate(949.5 669.6) scale(0.95 1)" text-anchor="middle" fill="#E4CA40" style="font-family:Liberation Sans,sans-serif;font-size:11px">140</text><text transform="translate(994.5 669.6) scale(0.95 1)" text-anchor="middle" fill="#E4CA40" style="font-family:Liberation Sans,sans-serif;font-size:11px">150</text><text transform="translate(1038.5 669.6) scale(0.95 1)" text-anchor="middle" fill="#E4CA40" style="font-family:Liberation Sans,sans-serif;font-size:11px">160</text><text transform="translate(1082.5 669.6) scale(0.95 1)" text-anchor="middle" fill="#E4CA40" style="font-family:Liberation Sans,sans-serif;font-size:11px">170</text><text transform="translate(1126.5 669.6) scale(0.95 1)" text-anchor="middle" fill="#E4CA40" style="font-family:Liberation Sans,sans-serif;font-size:11px">180</text><text transform="translate(1170.5 669.6) scale(0.95 1)" text-anchor="middle" fill="#E4CA40" style="font-family:Liberation Sans,sans-serif;font-size:11px">190</text><text transform="translate(1214.5 669.6) scale(0.95 1)" text-anchor="middle" fill="#E4CA40" style="font-family:Liberation Sans,sans-serif;font-size:11px">200</text><text transform="translate(1258.5 669.6) scale(0.95 1)" text-anchor="middle" fill="#E4CA40" style="font-family:Liberation Sans,sans-serif;font-size:11px">210</text><text transform="translate(1302.5 669.6) scale(0.95 1)" text-anchor="middle" fill="#E4CA40" style="font-family:Liberation Sans,sans-serif;font-size:11px">220</text><text transform="translate(1346.5 669.6) scale(0.95 1)" text-anchor="middle" fill="#E4CA40" style="font-family:Liberation Sans,sans-serif;font-size:11px">230</text><text transform="translate(1390.5 669.6) scale(0.95 1)" text-anchor="middle" fill="#E4CA40" style="font-family:Liberation Sans,sans-serif;font-size:11px">240</text><text transform="translate(1435.5 669.6) scale(0.95 1)" text-anchor="middle" fill="#E4CA40" style="font-family:Liberation Sans,sans-serif;font-size:11px">250</text><path d="M332.5 652.5V658.5M376.5 652.5V658.5M420.5 652.5V658.5M464.5 652.5V658.5M508.5 652.5V658.5M553.5 652.5V658.5M597.5 652.5V658.5M641.5 652.5V658.5M685.5 652.5V658.5M729.5 652.5V658.5M773.5 652.5V658.5M817.5 652.5V658.5M861.5 652.5V658.5M905.5 652.5V658.5M949.5 652.5V658.5M994.5 652.5V658.5M1038.5 652.5V658.5M1082.5 652.5V658.5M1126.5 652.5V658.5M1170.5 652.5V658.5M1214.5 652.5V658.5M1258.5 652.5V658.5M1302.5 652.5V658.5M1346.5 652.5V658.5M1390.5 652.5V658.5M1435.5 652.5V658.5" stroke="#E4CA40" stroke-width="1"/><text transform="translate(883.0 682.5) scale(0.95 1)" text-anchor="middle" fill="#E4CA40" style="font-family:Liberation Sans,sans-serif;font-size:11px">[ ms ]</text></svg>
</body></html>
